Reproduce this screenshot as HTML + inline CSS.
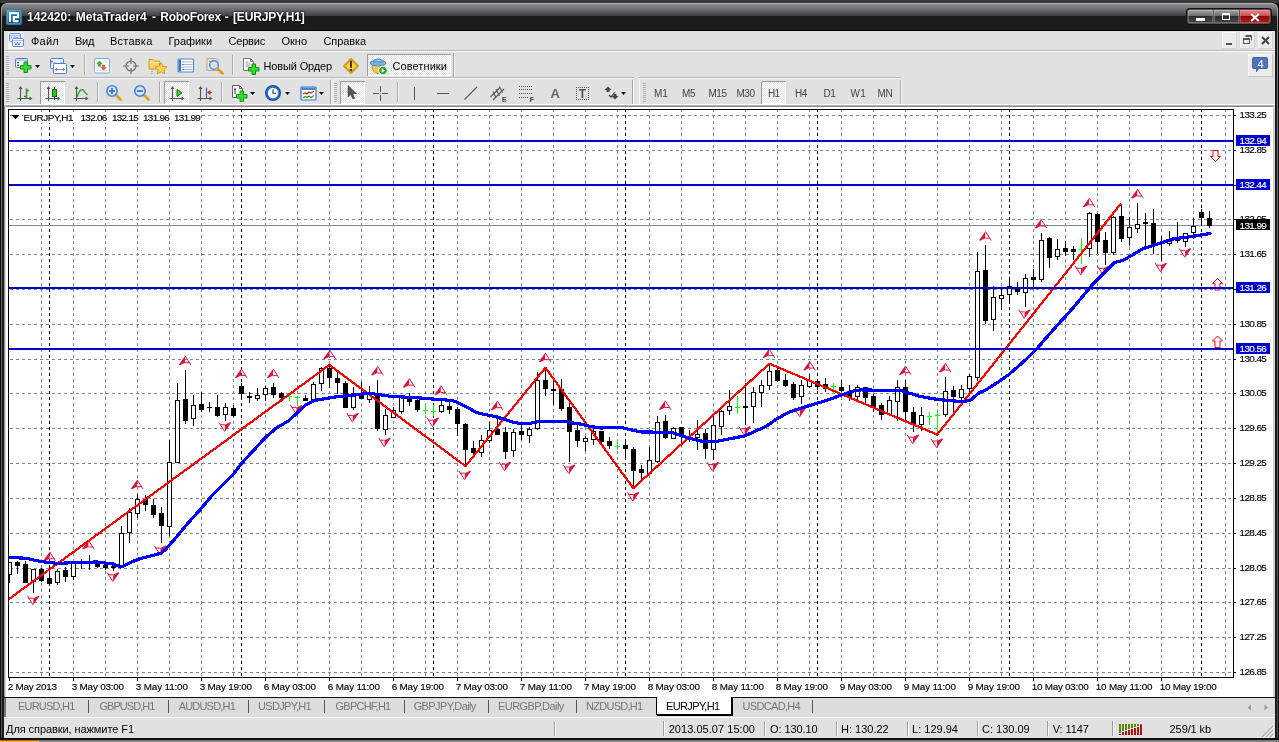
<!DOCTYPE html>
<html><head><meta charset="utf-8"><title>MetaTrader4</title><style>html,body{margin:0;padding:0;background:#0b0b0b;width:1279px;height:742px;overflow:hidden;}
#w{position:relative;width:1279px;height:742px;overflow:hidden;font-family:"Liberation Sans", sans-serif;}
#w div,#w svg,#w span{position:absolute;}
#w svg{overflow:visible;}
.t{white-space:nowrap;}
#tx{left:0;top:0;width:1279px;height:742px;will-change:transform;}
</style></head><body><div id="w">
<div style="left:0px;top:0px;width:1279px;height:742px;background:#0b0b0b;"></div>
<div style="left:0px;top:0px;width:1279px;height:3px;background:#353535;"></div>
<div style="left:0px;top:1px;width:1279px;height:1px;background:#424242;"></div>
<div style="left:1px;top:3px;width:1277px;height:737px;border-radius:6px 6px 0 0;background:linear-gradient(#b4b4b8 0px,#777 30px,#505050 100%);"></div>
<div style="left:2px;top:4px;width:1275px;height:736px;border-radius:5px 5px 0 0;background:linear-gradient(#8e8e92 0px,#7c7c80 3px,#424244 11.5px,#1c1c1e 12px,#1c1c1e 100%);"></div>
<div style="left:4px;top:30px;width:1271px;height:1px;background:#000;"></div>
<div style="left:4px;top:31px;width:1271px;height:75px;background:#e1e1e1;"></div>
<div style="left:4px;top:51px;width:1271px;height:1px;background:#fff;"></div>
<div style="left:4px;top:50px;width:1271px;height:1px;background:#b8b8b8;"></div>
<div style="left:4px;top:77px;width:328px;height:1px;background:#b8b8b8;"></div>
<div style="left:4px;top:78px;width:328px;height:1px;background:#fafafa;"></div>
<div style="left:334px;top:77px;width:300px;height:1px;background:#b8b8b8;"></div>
<div style="left:334px;top:78px;width:300px;height:1px;background:#fafafa;"></div>
<div style="left:639px;top:77px;width:262px;height:1px;background:#b8b8b8;"></div>
<div style="left:639px;top:78px;width:262px;height:1px;background:#fafafa;"></div>
<div style="left:4px;top:77px;width:451px;height:1px;background:#b8b8b8;"></div>
<div style="left:4px;top:104px;width:1271px;height:1px;background:#fafafa;"></div>
<div style="left:4px;top:105px;width:1271px;height:1px;background:#b4b4b4;"></div>
<div style="left:4px;top:106px;width:1271px;height:591px;background:#fff;"></div>
<div style="left:4px;top:106px;width:1271px;height:1px;background:#8c8a84;"></div>
<div style="left:4px;top:106px;width:1px;height:591px;background:#9a9a9a;"></div>
<div style="left:5px;top:106px;width:1px;height:591px;background:#d8d8d8;"></div>
<div style="left:1273px;top:106px;width:2px;height:591px;background:#d0d0d0;"></div>
<div style="left:4px;top:697px;width:1271px;height:1px;background:#111;"></div>
<div style="left:4px;top:698px;width:1271px;height:19px;background:#dcdcdc;"></div>
<div style="left:4px;top:717px;width:1271px;height:1px;background:#fff;"></div>
<div style="left:4px;top:718px;width:1271px;height:20px;background:#e1e1e1;"></div>
<div style="left:0px;top:738px;width:1279px;height:2px;background:#0e0e10;"></div>
<div style="left:0px;top:740px;width:1279px;height:2px;background:#808080;"></div>
<div style="left:0px;top:740px;width:39px;height:2px;background:#f4b040;"></div>
<div style="left:0px;top:740px;width:39px;height:1px;background:#c86010;"></div>
<svg style="left:6px;top:9px;" width="16" height="16" viewBox="0 0 16 16"><defs><linearGradient id="lg" x1="0" y1="0" x2="0.6" y2="1"><stop offset="0" stop-color="#5fa6cc"/><stop offset="0.45" stop-color="#1f70a2"/><stop offset="1" stop-color="#0c4670"/></linearGradient></defs><rect x="0.5" y="0.5" width="15" height="15" rx="1" fill="url(#lg)" stroke="#2a7cab"/><rect x="1.5" y="1.5" width="13" height="13" fill="none" stroke="#7fbbd9" stroke-opacity=".55"/><path d="M4 13V4.1H12.1V8.1H7.8V12.1H12.6" fill="none" stroke="#fff" stroke-width="2.1"/></svg>
<div style="left:1187px;top:9px;width:84px;height:15px;border-radius:3px;background:#555;box-shadow:0 0 0 1px #111;"></div>
<div style="left:1188px;top:10px;width:25px;height:13px;border-radius:2px 0 0 2px;box-shadow:inset 0 0 0 1px rgba(255,255,255,.22);background:linear-gradient(#a4a4a4,#6c6c6c 45%,#2e2e2e 50%,#484848);"></div>
<div style="left:1214px;top:10px;width:25px;height:13px;box-shadow:inset 0 0 0 1px rgba(255,255,255,.22);background:linear-gradient(#a4a4a4,#6c6c6c 45%,#2e2e2e 50%,#484848);"></div>
<div style="left:1240px;top:10px;width:30px;height:13px;border-radius:0 2px 2px 0;box-shadow:inset 0 0 0 1px rgba(255,140,140,.35);background:linear-gradient(#e89090,#c84c4c 45%,#8e0808 50%,#b02020);"></div>
<div style="left:1196px;top:18px;width:9px;height:3px;background:#fff;"></div>
<div style="left:1222px;top:13px;width:6px;height:4px;border:1px solid #fff;border-top-width:2px;"></div>
<svg style="left:1250px;top:12.5px" width="10" height="9" viewBox="0 0 10 9"><path d="M1.2 1L8.8 8M8.8 1L1.2 8" stroke="#fff" stroke-width="2"/></svg>
<svg style="left:8px;top:32px;" width="16" height="17" viewBox="0 0 16 17"><rect x="0" y="0" width="16" height="17" fill="#f6f6f6"/><rect x="1.5" y="1.5" width="11" height="8" rx="1" fill="#e8f0ff" stroke="#5b8df0"/><path d="M2 3.5h10" stroke="#a9c4f6"/><rect x="4.5" y="6.5" width="11" height="8" rx="1" fill="#fff" stroke="#5b8df0"/><path d="M5 8.5h10" stroke="#a9c4f6"/><path d="M3.5 6.5v-2M5.5 6l1.5-1.5 1.5 1.5 1.5-1" fill="none" stroke="#5b8df0" stroke-width="0.9"/><path d="M6.5 10l1.5 3 1.5-3 1.5 3 1.5-3" fill="none" stroke="#4a7ae8" stroke-width="0.9"/></svg>
<div style="left:1222px;top:32px;width:15px;height:17px;background:#ececec;box-shadow:inset -1px -1px 0 #d4d4d4, inset 1px 1px 0 #fafafa;"></div>
<div style="left:1240px;top:32px;width:15px;height:17px;background:#ececec;box-shadow:inset -1px -1px 0 #d4d4d4, inset 1px 1px 0 #fafafa;"></div>
<div style="left:1258px;top:32px;width:15px;height:17px;background:#ececec;box-shadow:inset -1px -1px 0 #d4d4d4, inset 1px 1px 0 #fafafa;"></div>
<div style="left:1226px;top:43px;width:6px;height:2px;background:#555;"></div>
<svg style="left:1243px;top:35px" width="10" height="10" viewBox="0 0 10 10"><path d="M2.5 0.5h6v5M2.5 1.5h6" stroke="#555" fill="none"/><rect x="0.5" y="3.5" width="6" height="5" fill="#ececec" stroke="#555"/><path d="M0.5 4.5h6" stroke="#555"/></svg>
<svg style="left:1261px;top:36px" width="9" height="9" viewBox="0 0 9 9"><path d="M1 1L8 8M8 1L1 8" stroke="#444" stroke-width="2"/></svg>
<div style="left:6px;top:56px;width:3px;height:1px;background:#b4b4b4;"></div><div style="left:6px;top:58px;width:3px;height:1px;background:#b4b4b4;"></div><div style="left:6px;top:60px;width:3px;height:1px;background:#b4b4b4;"></div><div style="left:6px;top:62px;width:3px;height:1px;background:#b4b4b4;"></div><div style="left:6px;top:64px;width:3px;height:1px;background:#b4b4b4;"></div><div style="left:6px;top:66px;width:3px;height:1px;background:#b4b4b4;"></div><div style="left:6px;top:68px;width:3px;height:1px;background:#b4b4b4;"></div><div style="left:6px;top:70px;width:3px;height:1px;background:#b4b4b4;"></div><div style="left:6px;top:72px;width:3px;height:1px;background:#b4b4b4;"></div><div style="left:6px;top:74px;width:3px;height:1px;background:#b4b4b4;"></div>
<svg style="left:15px;top:57px;" width="19" height="18" viewBox="0 0 19 18"><rect x="0.5" y="1.5" width="12" height="9" rx="1" fill="#fff" stroke="#4a80d4"/><path d="M1 3h11" stroke="#7aa4e6"/><path d="M3 5v4M2 6l1-1 1 1M2 8l1 1 1-1" stroke="#555" fill="none" stroke-width="0.8"/><path d="M5.5 8.5h3.5v-3.5h3.5v3.5h3.5v3.5h-3.5v3.5h-3.5v-3.5h-3.5z" fill="#36dc36" stroke="#129412" stroke-width="1"/></svg>
<svg style="left:35px;top:65px;" width="5" height="3" viewBox="0 0 5 3"><path d="M0 0h5L2.5 3z" fill="#000"/></svg>
<svg style="left:49px;top:57px;" width="19" height="18" viewBox="0 0 19 18"><rect x="1.5" y="1.5" width="13" height="10" rx="1" fill="#eef4ff" stroke="#4a80d4"/><path d="M3 3.5v3M2 4.5h2M5 6.5h8M5 6.5l1.5-1.5M5 6.5l1.5 1.5M13 6.5l-1.5-1.5M13 6.5l-1.5 1.5" stroke="#5a6a8a" fill="none" stroke-width="0.8"/><rect x="4.5" y="6.5" width="13" height="10" rx="1" fill="#fff" stroke="#4a80d4"/><path d="M6.5 12.5h9M6.5 12.5l1.5-1.5M6.5 12.5l1.5 1.5M15.5 12.5l-1.5-1.5M15.5 12.5l-1.5 1.5" stroke="#5a6a8a" fill="none" stroke-width="0.8"/></svg>
<svg style="left:70px;top:65px;" width="5" height="3" viewBox="0 0 5 3"><path d="M0 0h5L2.5 3z" fill="#000"/></svg>
<div style="left:84px;top:55px;width:1px;height:20px;background:#a8a8a8;"></div><div style="left:85px;top:55px;width:1px;height:20px;background:#f6f6f6;"></div>
<svg style="left:93px;top:57px;" width="18" height="18" viewBox="0 0 18 18"><rect x="1.5" y="1.5" width="15" height="14.5" rx="1.5" fill="#fff" stroke="#7ea8e6" stroke-width="1"/><path d="M3 13.5h12M9.5 4.5h5M3.5 11h4" stroke="#d4e0f4"/><path d="M6.5 4l2.6 2.8h-1.6v2.4h-2v-2.4H3.9z" fill="#35b835" stroke="#0b7a0b" stroke-width="0.5"/><path d="M10.5 13.2l-2.6-2.8h1.6v-2.4h2v2.4h1.6z" fill="#f2603a" stroke="#b83010" stroke-width="0.5"/></svg>
<svg style="left:122px;top:57px;" width="18" height="18" viewBox="0 0 18 18"><circle cx="9" cy="9" r="5" fill="none" stroke="#6e6e6e" stroke-width="1.2"/><path d="M9 1v6M9 11v6M1 9h6M11 9h6" stroke="#6e6e6e" stroke-width="1.2"/></svg>
<svg style="left:148px;top:56px;" width="20" height="19" viewBox="0 0 20 19"><path d="M1 3.5h4l1.5 1.5h5v8h-10.5z" fill="#f6d36a" stroke="#c8982a"/><path d="M1.5 6.5h10" stroke="#fbe9a8"/><path d="M4 13v5" stroke="#888" stroke-dasharray="1 1"/><path d="M13 6.5l1.8 3.8 4.2.5-3.1 2.9.8 4.1-3.7-2-3.7 2 .8-4.1-3.1-2.9 4.2-.5z" fill="#fbd54a" stroke="#c8941a" stroke-width="0.9"/></svg>
<svg style="left:177px;top:58px;" width="18" height="16" viewBox="0 0 18 16"><rect x="1" y="1" width="15.5" height="13" rx="1" fill="#fff" stroke="#4a84dc" stroke-width="1.1"/><rect x="1.6" y="1.6" width="2.6" height="11.8" fill="#3f74c4"/><path d="M6.5 4h9M6.5 6.5h9M6.5 9h9M6.5 11.5h9" stroke="#9db8e0"/><path d="M5.5 4h1M5.5 9h1" stroke="#e22"/><path d="M5.5 6.5h1M5.5 11.5h1" stroke="#222"/></svg>
<svg style="left:205px;top:56px;" width="20" height="20" viewBox="0 0 20 20"><path d="M2 2.5h9l2 2v10h-11z" fill="#ece6d8" stroke="#b0a890"/><path d="M4 5l2 1 2-2 2 1" stroke="#778" fill="none"/><circle cx="9" cy="9" r="4.3" fill="#cfe2f8" fill-opacity=".85" stroke="#5a8cd4" stroke-width="1.5"/><path d="M12.5 12.5l5 5" stroke="#d8a020" stroke-width="2.6" stroke-linecap="round"/></svg>
<div style="left:232px;top:55px;width:1px;height:20px;background:#a8a8a8;"></div><div style="left:233px;top:55px;width:1px;height:20px;background:#f6f6f6;"></div>
<svg style="left:242px;top:57px;" width="19" height="19" viewBox="0 0 19 19"><path d="M1.5 1.5h7l3 3v9h-10z" fill="#fff" stroke="#777"/><path d="M8.5 1.5v3h3" fill="none" stroke="#777"/><path d="M3.5 5h3M3.5 7h5M3.5 9h4" stroke="#999"/><path d="M6.5 10.5h3.5v-3.5h3.5v3.5h3.5v3.5h-3.5v3.5h-3.5v-3.5h-3.5z" fill="#36dc36" stroke="#129412" stroke-width="1"/></svg>
<svg style="left:342px;top:57px;" width="18" height="18" viewBox="0 0 18 18"><path d="M9 2L16 9L9 16L2 9z" fill="#f7d23e" stroke="#cf9c1c" stroke-width="2" stroke-linejoin="round"/><path d="M9 4.5v5.5" stroke="#4a3a10" stroke-width="2" stroke-linecap="round"/><circle cx="9" cy="13" r="1.2" fill="#4a3a10"/></svg>
<div style="left:367px;top:54px;width:84px;height:22px;background-image:linear-gradient(45deg,#fff 25%,transparent 25%,transparent 75%,#fff 75%),linear-gradient(45deg,#fff 25%,transparent 25%,transparent 75%,#fff 75%);background-size:2px 2px;background-position:0 0,1px 1px;background-color:#e4e4e4;box-shadow:inset 1px 1px 0 #9c9c9c, inset -1px -1px 0 #fff;"></div>
<svg style="left:369px;top:56px;" width="20" height="20" viewBox="0 0 20 20"><ellipse cx="9" cy="11" rx="6" ry="6.5" fill="#f2c84a" stroke="#c89a20"/><ellipse cx="9" cy="7" rx="8" ry="2.8" fill="#7ab4e6" stroke="#4a86c4"/><path d="M4.5 6c0-4 9-4 9 0z" fill="#8cc2ee" stroke="#4a86c4"/><circle cx="14" cy="14.5" r="4.3" fill="#25a825" stroke="#fff" stroke-width="1"/><path d="M12.6 12.3v4.4l3.6-2.2z" fill="#fff"/></svg>
<div style="left:453px;top:53px;width:1px;height:24px;background:#a8a8a8;"></div><div style="left:454px;top:53px;width:1px;height:24px;background:#f6f6f6;"></div>
<div style="left:1248px;top:54px;width:25px;height:23px;background:#ececec;box-shadow:inset -1px -1px 0 #c4c4c4, inset 1px 1px 0 #fafafa;"></div>
<svg style="left:1252px;top:57px;" width="17" height="15" viewBox="0 0 17 15"><path d="M1.5 0.5h13a1 1 0 0 1 1 1v9a1 1 0 0 1-1 1h-8l-2 3v-3h-3a1 1 0 0 1-1-1v-9a1 1 0 0 1 1-1z" fill="#4f74b8" stroke="#3f63a4"/></svg>
<div style="left:6px;top:83px;width:3px;height:1px;background:#b4b4b4;"></div><div style="left:6px;top:85px;width:3px;height:1px;background:#b4b4b4;"></div><div style="left:6px;top:87px;width:3px;height:1px;background:#b4b4b4;"></div><div style="left:6px;top:89px;width:3px;height:1px;background:#b4b4b4;"></div><div style="left:6px;top:91px;width:3px;height:1px;background:#b4b4b4;"></div><div style="left:6px;top:93px;width:3px;height:1px;background:#b4b4b4;"></div><div style="left:6px;top:95px;width:3px;height:1px;background:#b4b4b4;"></div><div style="left:6px;top:97px;width:3px;height:1px;background:#b4b4b4;"></div><div style="left:6px;top:99px;width:3px;height:1px;background:#b4b4b4;"></div><div style="left:6px;top:101px;width:3px;height:1px;background:#b4b4b4;"></div>
<svg style="left:17px;top:86px;" width="16" height="16" viewBox="0 0 16 16"><path d="M3.5 1v14M0.5 12.5h14" stroke="#555" stroke-width="1.1" fill="none"/><path d="M3.5 0l-2 3h4zM15.5 12.5l-3-2v4z" fill="#555"/><path d="M9.5 2.5v10M9.5 4.5h2.5M7 10.5h2.5" stroke="#2a9a2a" stroke-width="1.6" fill="none"/></svg>
<div style="left:40px;top:81px;width:25px;height:23px;background-image:linear-gradient(45deg,#fff 25%,transparent 25%,transparent 75%,#fff 75%),linear-gradient(45deg,#fff 25%,transparent 25%,transparent 75%,#fff 75%);background-size:2px 2px;background-position:0 0,1px 1px;background-color:#e4e4e4;box-shadow:inset 1px 1px 0 #9c9c9c, inset -1px -1px 0 #fff;"></div>
<svg style="left:45px;top:86px;" width="16" height="16" viewBox="0 0 16 16"><path d="M3.5 1v14M0.5 12.5h14" stroke="#555" stroke-width="1.1" fill="none"/><path d="M3.5 0l-2 3h4zM15.5 12.5l-3-2v4z" fill="#555"/><path d="M9.5 1v13" stroke="#333"/><rect x="7.5" y="3.5" width="4" height="7" fill="#2fc02f" stroke="#0b7a0b"/></svg>
<svg style="left:73px;top:86px;" width="16" height="16" viewBox="0 0 16 16"><path d="M3.5 1v14M0.5 12.5h14" stroke="#555" stroke-width="1.1" fill="none"/><path d="M3.5 0l-2 3h4zM15.5 12.5l-3-2v4z" fill="#555"/><path d="M4 11C6 4 9 2 11 5 12.5 7 13 8 14.5 9" stroke="#2a9a2a" stroke-width="1.3" fill="none"/></svg>
<div style="left:97px;top:82px;width:1px;height:20px;background:#a8a8a8;"></div><div style="left:98px;top:82px;width:1px;height:20px;background:#f6f6f6;"></div>
<svg style="left:105px;top:84px;" width="18" height="18" viewBox="0 0 18 18"><path d="M10.5 10.5l5 5" stroke="#d8a420" stroke-width="2.8" stroke-linecap="round"/><circle cx="7" cy="7" r="5.2" fill="#d6e6fa" stroke="#4a84d8" stroke-width="1.6"/><path d="M4 7h6" stroke="#3a74c8" stroke-width="1.8"/><path d="M7 4v6" stroke="#3a74c8" stroke-width="1.8"/></svg>
<svg style="left:133px;top:84px;" width="18" height="18" viewBox="0 0 18 18"><path d="M10.5 10.5l5 5" stroke="#d8a420" stroke-width="2.8" stroke-linecap="round"/><circle cx="7" cy="7" r="5.2" fill="#d6e6fa" stroke="#4a84d8" stroke-width="1.6"/><path d="M4 7h6" stroke="#3a74c8" stroke-width="1.8"/></svg>
<div style="left:159px;top:82px;width:1px;height:20px;background:#a8a8a8;"></div><div style="left:160px;top:82px;width:1px;height:20px;background:#f6f6f6;"></div>
<div style="left:164px;top:81px;width:25px;height:23px;background-image:linear-gradient(45deg,#fff 25%,transparent 25%,transparent 75%,#fff 75%),linear-gradient(45deg,#fff 25%,transparent 25%,transparent 75%,#fff 75%);background-size:2px 2px;background-position:0 0,1px 1px;background-color:#e4e4e4;box-shadow:inset 1px 1px 0 #9c9c9c, inset -1px -1px 0 #fff;"></div>
<svg style="left:169px;top:86px;" width="16" height="16" viewBox="0 0 16 16"><path d="M3.5 1v14M0.5 12.5h14" stroke="#555" stroke-width="1.1" fill="none"/><path d="M3.5 0l-2 3h4zM15.5 12.5l-3-2v4z" fill="#555"/><path d="M8 3.5v7l5-3.5z" fill="#3fd03f" stroke="#0b7a0b"/></svg>
<svg style="left:197px;top:86px;" width="16" height="16" viewBox="0 0 16 16"><path d="M3.5 1v14M0.5 12.5h14" stroke="#555" stroke-width="1.1" fill="none"/><path d="M3.5 0l-2 3h4zM15.5 12.5l-3-2v4z" fill="#555"/><path d="M9.5 1.5v11" stroke="#2a6ab0" stroke-width="1.2"/><path d="M15 6.5h-4M10.5 6.5l2.6-1.8v3.6z" stroke="#d03010" fill="#d03010" stroke-width="0.9"/></svg>
<div style="left:221px;top:82px;width:1px;height:20px;background:#a8a8a8;"></div><div style="left:222px;top:82px;width:1px;height:20px;background:#f6f6f6;"></div>
<svg style="left:231px;top:84px;" width="18" height="19" viewBox="0 0 18 19"><path d="M1.5 1.5h7l3 3v9h-10z" fill="#fff" stroke="#666"/><path d="M8.5 1.5v3h3" fill="none" stroke="#666"/><path d="M4 4v6M3 5.5h2" stroke="#444"/><path d="M5.5 10.5h3.5v-3.5h3.5v3.5h3.5v3.5h-3.5v3.5h-3.5v-3.5h-3.5z" fill="#36dc36" stroke="#129412" stroke-width="1"/></svg>
<svg style="left:249.5px;top:92px;" width="5" height="3" viewBox="0 0 5 3"><path d="M0 0h5L2.5 3z" fill="#000"/></svg>
<svg style="left:264px;top:84px;" width="18" height="18" viewBox="0 0 18 18"><circle cx="9" cy="9" r="7.4" fill="#2a6fd0" stroke="#1a4fa0" stroke-width="1.2"/><circle cx="9" cy="9" r="5.2" fill="#f4f8ff"/><path d="M9 5.5v3.8h3" stroke="#333" stroke-width="1.1" fill="none"/></svg>
<svg style="left:284.5px;top:92px;" width="5" height="3" viewBox="0 0 5 3"><path d="M0 0h5L2.5 3z" fill="#000"/></svg>
<svg style="left:299.5px;top:85.5px;" width="18" height="16" viewBox="0 0 18 16"><rect x="1" y="1" width="15" height="13" rx="1" fill="#fff" stroke="#3a74c8" stroke-width="1.2"/><rect x="1.5" y="1.5" width="14" height="2.5" fill="#4a84d8"/><path d="M3 8l2-1 2 1 2-2 2 1 3-2" stroke="#d03010" fill="none" stroke-width="1.2"/><path d="M3 12l2-1.5 2 1 2-1.5 2 1.5 3-2" stroke="#2a9a2a" fill="none" stroke-width="1.2"/></svg>
<svg style="left:319px;top:92px;" width="5" height="3" viewBox="0 0 5 3"><path d="M0 0h5L2.5 3z" fill="#000"/></svg>
<div style="left:330px;top:80px;width:1px;height:24px;background:#a8a8a8;"></div><div style="left:331px;top:80px;width:1px;height:24px;background:#f6f6f6;"></div>
<div style="left:334px;top:83px;width:3px;height:1px;background:#b4b4b4;"></div><div style="left:334px;top:85px;width:3px;height:1px;background:#b4b4b4;"></div><div style="left:334px;top:87px;width:3px;height:1px;background:#b4b4b4;"></div><div style="left:334px;top:89px;width:3px;height:1px;background:#b4b4b4;"></div><div style="left:334px;top:91px;width:3px;height:1px;background:#b4b4b4;"></div><div style="left:334px;top:93px;width:3px;height:1px;background:#b4b4b4;"></div><div style="left:334px;top:95px;width:3px;height:1px;background:#b4b4b4;"></div><div style="left:334px;top:97px;width:3px;height:1px;background:#b4b4b4;"></div><div style="left:334px;top:99px;width:3px;height:1px;background:#b4b4b4;"></div><div style="left:334px;top:101px;width:3px;height:1px;background:#b4b4b4;"></div>
<div style="left:340px;top:81px;width:25px;height:23px;background-image:linear-gradient(45deg,#fff 25%,transparent 25%,transparent 75%,#fff 75%),linear-gradient(45deg,#fff 25%,transparent 25%,transparent 75%,#fff 75%);background-size:2px 2px;background-position:0 0,1px 1px;background-color:#e4e4e4;box-shadow:inset 1px 1px 0 #9c9c9c, inset -1px -1px 0 #fff;"></div>
<svg style="left:347px;top:85px;" width="10" height="15" viewBox="0 0 10 15"><path d="M1 0.5v11.5l2.8-2.6 2 4.6 1.9-.8-2-4.5h3.8z" fill="#555" stroke="#444" stroke-width="0.6"/></svg>
<svg style="left:373px;top:86px;" width="16" height="16" viewBox="0 0 16 16"><path shape-rendering="crispEdges" d="M7.5 0v6M7.5 9v6M0 7.5h6M9 7.5h6" stroke="#555" stroke-width="1"/><rect x="7" y="7" width="1" height="1" fill="#888"/></svg>
<div style="left:397px;top:82px;width:1px;height:20px;background:#a8a8a8;"></div><div style="left:398px;top:82px;width:1px;height:20px;background:#f6f6f6;"></div>
<div style="left:414px;top:87px;width:1px;height:13px;background:#555;"></div>
<div style="left:437px;top:93px;width:12px;height:1px;background:#555;"></div>
<svg style="left:464px;top:86px;" width="14" height="14" viewBox="0 0 14 14"><path d="M0.5 13.5L13 1" stroke="#555" stroke-width="1.1"/></svg>
<svg style="left:490px;top:85px;" width="17" height="17" viewBox="0 0 17 17"><path d="M0.5 12L10 2.5M3 15L14 4M3 6.5l3 6M6 4l3.5 7M9.5 1.5l3 6" stroke="#555" stroke-width="1.1" fill="none"/></svg>
<svg style="left:519px;top:85px;" width="16" height="14" viewBox="0 0 16 14"><path shape-rendering="crispEdges" d="M0 1.5h14M0 4.5h14M0 8.5h14M0 12.5h10" stroke="#555" stroke-dasharray="1 1"/></svg>
<svg style="left:575px;top:86px;" width="15" height="15" viewBox="0 0 15 15"><path shape-rendering="crispEdges" d="M1 1.5h13M1 13.5h13M1.5 1v13M13.5 1v13" fill="none" stroke="#555" stroke-dasharray="1 1"/></svg>
<svg style="left:604px;top:86px;" width="15" height="14" viewBox="0 0 15 14"><path d="M4 0.5l3.5 3.5h-2v2h-3v-2h-2z M11 13.5l-3.5-3.5h2v-2h3v2h2z" fill="#444"/><path d="M5 9l2 2 4-5" stroke="#444" fill="none" stroke-width="1.2"/></svg>
<svg style="left:621px;top:92px;" width="5" height="3" viewBox="0 0 5 3"><path d="M0 0h5L2.5 3z" fill="#000"/></svg>
<div style="left:632px;top:80px;width:1px;height:24px;background:#a8a8a8;"></div><div style="left:633px;top:80px;width:1px;height:24px;background:#f6f6f6;"></div>
<div style="left:643px;top:83px;width:3px;height:1px;background:#b4b4b4;"></div><div style="left:643px;top:85px;width:3px;height:1px;background:#b4b4b4;"></div><div style="left:643px;top:87px;width:3px;height:1px;background:#b4b4b4;"></div><div style="left:643px;top:89px;width:3px;height:1px;background:#b4b4b4;"></div><div style="left:643px;top:91px;width:3px;height:1px;background:#b4b4b4;"></div><div style="left:643px;top:93px;width:3px;height:1px;background:#b4b4b4;"></div><div style="left:643px;top:95px;width:3px;height:1px;background:#b4b4b4;"></div><div style="left:643px;top:97px;width:3px;height:1px;background:#b4b4b4;"></div><div style="left:643px;top:99px;width:3px;height:1px;background:#b4b4b4;"></div><div style="left:643px;top:101px;width:3px;height:1px;background:#b4b4b4;"></div>
<div style="left:761px;top:81px;width:25px;height:23px;background-image:linear-gradient(45deg,#fff 25%,transparent 25%,transparent 75%,#fff 75%),linear-gradient(45deg,#fff 25%,transparent 25%,transparent 75%,#fff 75%);background-size:2px 2px;background-position:0 0,1px 1px;background-color:#e4e4e4;box-shadow:inset 1px 1px 0 #9c9c9c, inset -1px -1px 0 #fff;"></div>
<div style="left:900px;top:80px;width:1px;height:24px;background:#a8a8a8;"></div><div style="left:901px;top:80px;width:1px;height:24px;background:#f6f6f6;"></div>
<div style="left:639px;top:79px;width:1px;height:25px;background:#f8f8f8;"></div>
<div style="left:333px;top:79px;width:1px;height:25px;background:#f8f8f8;"></div>
<svg style="left:0;top:0" width="1279" height="742" viewBox="0 0 1279 742"><g shape-rendering="crispEdges"><g stroke="#778899" stroke-width="1" stroke-dasharray="3 3" fill="none"><path d="M9 115.5 H1233" stroke-dashoffset="5"/><path d="M9 150.5 H1233" stroke-dashoffset="5"/><path d="M9 185.5 H1233" stroke-dashoffset="5"/><path d="M9 219.5 H1233" stroke-dashoffset="5"/><path d="M9 254.5 H1233" stroke-dashoffset="5"/><path d="M9 289.5 H1233" stroke-dashoffset="5"/><path d="M9 324.5 H1233" stroke-dashoffset="5"/><path d="M9 359.5 H1233" stroke-dashoffset="5"/><path d="M9 393.5 H1233" stroke-dashoffset="5"/><path d="M9 428.5 H1233" stroke-dashoffset="5"/><path d="M9 463.5 H1233" stroke-dashoffset="5"/><path d="M9 498.5 H1233" stroke-dashoffset="5"/><path d="M9 533.5 H1233" stroke-dashoffset="5"/><path d="M9 568.5 H1233" stroke-dashoffset="5"/><path d="M9 602.5 H1233" stroke-dashoffset="5"/><path d="M9 637.5 H1233" stroke-dashoffset="5"/><path d="M9 672.5 H1233" stroke-dashoffset="5"/><path d="M41.5 110 V677" stroke-dashoffset="1"/><path d="M73.5 110 V677" stroke-dashoffset="1"/><path d="M105.5 110 V677" stroke-dashoffset="1"/><path d="M137.5 110 V677" stroke-dashoffset="1"/><path d="M169.5 110 V677" stroke-dashoffset="1"/><path d="M201.5 110 V677" stroke-dashoffset="1"/><path d="M233.5 110 V677" stroke-dashoffset="1"/><path d="M265.5 110 V677" stroke-dashoffset="1"/><path d="M297.5 110 V677" stroke-dashoffset="1"/><path d="M329.5 110 V677" stroke-dashoffset="1"/><path d="M361.5 110 V677" stroke-dashoffset="1"/><path d="M393.5 110 V677" stroke-dashoffset="1"/><path d="M425.5 110 V677" stroke-dashoffset="1"/><path d="M457.5 110 V677" stroke-dashoffset="1"/><path d="M489.5 110 V677" stroke-dashoffset="1"/><path d="M521.5 110 V677" stroke-dashoffset="1"/><path d="M553.5 110 V677" stroke-dashoffset="1"/><path d="M585.5 110 V677" stroke-dashoffset="1"/><path d="M617.5 110 V677" stroke-dashoffset="1"/><path d="M649.5 110 V677" stroke-dashoffset="1"/><path d="M681.5 110 V677" stroke-dashoffset="1"/><path d="M713.5 110 V677" stroke-dashoffset="1"/><path d="M745.5 110 V677" stroke-dashoffset="1"/><path d="M777.5 110 V677" stroke-dashoffset="1"/><path d="M809.5 110 V677" stroke-dashoffset="1"/><path d="M841.5 110 V677" stroke-dashoffset="1"/><path d="M873.5 110 V677" stroke-dashoffset="1"/><path d="M905.5 110 V677" stroke-dashoffset="1"/><path d="M937.5 110 V677" stroke-dashoffset="1"/><path d="M969.5 110 V677" stroke-dashoffset="1"/><path d="M1001.5 110 V677" stroke-dashoffset="1"/><path d="M1033.5 110 V677" stroke-dashoffset="1"/><path d="M1065.5 110 V677" stroke-dashoffset="1"/><path d="M1097.5 110 V677" stroke-dashoffset="1"/><path d="M1129.5 110 V677" stroke-dashoffset="1"/><path d="M1161.5 110 V677" stroke-dashoffset="1"/><path d="M1193.5 110 V677" stroke-dashoffset="1"/><path d="M1225.5 110 V677" stroke-dashoffset="1"/></g><g stroke="#000" stroke-width="1" stroke-dasharray="3 3" fill="none"><path d="M49.5 110 V677" stroke-dashoffset="1"/><path d="M241.5 110 V677" stroke-dashoffset="1"/><path d="M433.5 110 V677" stroke-dashoffset="1"/><path d="M625.5 110 V677" stroke-dashoffset="1"/><path d="M817.5 110 V677" stroke-dashoffset="1"/><path d="M1009.5 110 V677" stroke-dashoffset="1"/><path d="M1201.5 110 V677" stroke-dashoffset="1"/></g><rect x="9" y="225" width="1224" height="1" fill="#7b8b9b"/><clipPath id="cc"><rect x="9" y="110" width="1224" height="567"/></clipPath><g clip-path="url(#cc)"><rect x="9" y="562" width="1" height="21" fill="#000"/><rect x="7" y="562" width="5" height="13" fill="#000"/><rect x="8" y="563" width="3" height="11" fill="#fff"/><rect x="17" y="561" width="1" height="13" fill="#000"/><rect x="15" y="562" width="5" height="4" fill="#000"/><rect x="25" y="561" width="1" height="22" fill="#000"/><rect x="23" y="564" width="5" height="19" fill="#000"/><rect x="33" y="569" width="1" height="24" fill="#000"/><rect x="31" y="569" width="5" height="13" fill="#000"/><rect x="32" y="570" width="3" height="11" fill="#fff"/><rect x="41" y="568" width="1" height="14" fill="#000"/><rect x="39" y="569" width="5" height="12" fill="#000"/><rect x="49" y="569" width="1" height="17" fill="#000"/><rect x="47" y="578" width="5" height="6" fill="#000"/><rect x="57" y="569" width="1" height="16" fill="#000"/><rect x="55" y="571" width="5" height="12" fill="#000"/><rect x="56" y="572" width="3" height="10" fill="#fff"/><rect x="65" y="567" width="1" height="15" fill="#000"/><rect x="63" y="570" width="5" height="7" fill="#000"/><rect x="73" y="562" width="1" height="18" fill="#000"/><rect x="71" y="562" width="5" height="15" fill="#000"/><rect x="72" y="563" width="3" height="13" fill="#fff"/><rect x="81" y="559" width="1" height="10" fill="#000"/><rect x="79" y="563" width="5" height="1" fill="#000"/><rect x="89" y="555" width="1" height="15" fill="#000"/><rect x="87" y="563" width="5" height="1" fill="#000"/><rect x="97" y="563" width="1" height="5" fill="#000"/><rect x="95" y="564" width="5" height="3" fill="#000"/><rect x="105" y="562" width="1" height="8" fill="#000"/><rect x="103" y="565" width="5" height="3" fill="#000"/><rect x="113" y="562" width="1" height="9" fill="#000"/><rect x="111" y="566" width="5" height="2" fill="#000"/><rect x="121" y="526" width="1" height="41" fill="#000"/><rect x="119" y="533" width="5" height="34" fill="#000"/><rect x="120" y="534" width="3" height="32" fill="#fff"/><rect x="129" y="508" width="1" height="35" fill="#000"/><rect x="127" y="512" width="5" height="21" fill="#000"/><rect x="128" y="513" width="3" height="19" fill="#fff"/><rect x="137" y="494" width="1" height="24" fill="#000"/><rect x="135" y="499" width="5" height="15" fill="#000"/><rect x="136" y="500" width="3" height="13" fill="#fff"/><rect x="145" y="495" width="1" height="16" fill="#000"/><rect x="143" y="499" width="5" height="6" fill="#000"/><rect x="153" y="499" width="1" height="19" fill="#000"/><rect x="151" y="505" width="5" height="10" fill="#000"/><rect x="161" y="507" width="1" height="36" fill="#000"/><rect x="159" y="513" width="5" height="13" fill="#000"/><rect x="169" y="440" width="1" height="96" fill="#000"/><rect x="167" y="462" width="5" height="65" fill="#000"/><rect x="168" y="463" width="3" height="63" fill="#fff"/><rect x="177" y="383" width="1" height="80" fill="#000"/><rect x="175" y="400" width="5" height="63" fill="#000"/><rect x="176" y="401" width="3" height="61" fill="#fff"/><rect x="185" y="370" width="1" height="54" fill="#000"/><rect x="183" y="399" width="5" height="22" fill="#000"/><rect x="193" y="395" width="1" height="31" fill="#000"/><rect x="191" y="405" width="5" height="14" fill="#000"/><rect x="192" y="406" width="3" height="12" fill="#fff"/><rect x="201" y="392" width="1" height="20" fill="#000"/><rect x="199" y="404" width="5" height="6" fill="#000"/><rect x="209" y="402" width="1" height="10" fill="#000"/><rect x="207" y="407" width="5" height="1" fill="#000"/><rect x="217" y="395" width="1" height="22" fill="#000"/><rect x="215" y="407" width="5" height="9" fill="#000"/><rect x="225" y="403" width="1" height="18" fill="#000"/><rect x="223" y="407" width="5" height="8" fill="#000"/><rect x="224" y="408" width="3" height="6" fill="#fff"/><rect x="233" y="405" width="1" height="12" fill="#000"/><rect x="231" y="408" width="5" height="8" fill="#000"/><rect x="241" y="383" width="1" height="17" fill="#000"/><rect x="239" y="386" width="5" height="8" fill="#000"/><rect x="249" y="392" width="1" height="11" fill="#000"/><rect x="247" y="396" width="5" height="2" fill="#000"/><rect x="257" y="388" width="1" height="13" fill="#000"/><rect x="255" y="395" width="5" height="4" fill="#000"/><rect x="256" y="396" width="3" height="2" fill="#fff"/><rect x="265" y="386" width="1" height="15" fill="#000"/><rect x="263" y="388" width="5" height="7" fill="#000"/><rect x="264" y="389" width="3" height="5" fill="#fff"/><rect x="273" y="383" width="1" height="15" fill="#000"/><rect x="271" y="387" width="5" height="8" fill="#000"/><rect x="281" y="392" width="1" height="10" fill="#000"/><rect x="279" y="393" width="5" height="5" fill="#000"/><rect x="289" y="395" width="1" height="6" fill="#00ff00"/><rect x="287" y="396" width="5" height="1" fill="#00ff00"/><rect x="297" y="396" width="1" height="8" fill="#00ff00"/><rect x="295" y="397" width="5" height="1" fill="#00ff00"/><rect x="305" y="395" width="1" height="6" fill="#000"/><rect x="303" y="398" width="5" height="3" fill="#000"/><rect x="313" y="382" width="1" height="19" fill="#000"/><rect x="311" y="384" width="5" height="16" fill="#000"/><rect x="312" y="385" width="3" height="14" fill="#fff"/><rect x="321" y="367" width="1" height="24" fill="#000"/><rect x="319" y="368" width="5" height="16" fill="#000"/><rect x="320" y="369" width="3" height="14" fill="#fff"/><rect x="329" y="365" width="1" height="23" fill="#000"/><rect x="327" y="368" width="5" height="10" fill="#000"/><rect x="337" y="372" width="1" height="22" fill="#000"/><rect x="335" y="378" width="5" height="5" fill="#000"/><rect x="345" y="381" width="1" height="27" fill="#000"/><rect x="343" y="383" width="5" height="25" fill="#000"/><rect x="353" y="387" width="1" height="23" fill="#000"/><rect x="351" y="393" width="5" height="15" fill="#000"/><rect x="352" y="394" width="3" height="13" fill="#fff"/><rect x="361" y="382" width="1" height="17" fill="#000"/><rect x="359" y="395" width="5" height="4" fill="#000"/><rect x="369" y="386" width="1" height="17" fill="#000"/><rect x="367" y="393" width="5" height="7" fill="#000"/><rect x="368" y="394" width="3" height="5" fill="#fff"/><rect x="377" y="380" width="1" height="51" fill="#000"/><rect x="375" y="395" width="5" height="34" fill="#000"/><rect x="385" y="409" width="1" height="26" fill="#000"/><rect x="383" y="415" width="5" height="15" fill="#000"/><rect x="384" y="416" width="3" height="13" fill="#fff"/><rect x="393" y="407" width="1" height="11" fill="#000"/><rect x="391" y="410" width="5" height="8" fill="#000"/><rect x="392" y="411" width="3" height="6" fill="#fff"/><rect x="401" y="396" width="1" height="18" fill="#000"/><rect x="399" y="396" width="5" height="16" fill="#000"/><rect x="400" y="397" width="3" height="14" fill="#fff"/><rect x="409" y="393" width="1" height="13" fill="#000"/><rect x="407" y="396" width="5" height="6" fill="#000"/><rect x="417" y="399" width="1" height="13" fill="#000"/><rect x="415" y="400" width="5" height="10" fill="#000"/><rect x="425" y="404" width="1" height="10" fill="#00ff00"/><rect x="423" y="410" width="5" height="1" fill="#00ff00"/><rect x="433" y="405" width="1" height="11" fill="#00ff00"/><rect x="431" y="411" width="5" height="1" fill="#00ff00"/><rect x="441" y="401" width="1" height="12" fill="#000"/><rect x="439" y="405" width="5" height="7" fill="#000"/><rect x="440" y="406" width="3" height="5" fill="#fff"/><rect x="449" y="402" width="1" height="12" fill="#000"/><rect x="447" y="406" width="5" height="4" fill="#000"/><rect x="457" y="407" width="1" height="29" fill="#000"/><rect x="455" y="409" width="5" height="15" fill="#000"/><rect x="465" y="423" width="1" height="44" fill="#000"/><rect x="463" y="424" width="5" height="26" fill="#000"/><rect x="473" y="441" width="1" height="15" fill="#000"/><rect x="471" y="448" width="5" height="5" fill="#000"/><rect x="481" y="435" width="1" height="22" fill="#000"/><rect x="479" y="440" width="5" height="13" fill="#000"/><rect x="480" y="441" width="3" height="11" fill="#fff"/><rect x="489" y="422" width="1" height="21" fill="#000"/><rect x="487" y="430" width="5" height="11" fill="#000"/><rect x="488" y="431" width="3" height="9" fill="#fff"/><rect x="497" y="416" width="1" height="19" fill="#000"/><rect x="495" y="429" width="5" height="6" fill="#000"/><rect x="505" y="427" width="1" height="32" fill="#000"/><rect x="503" y="432" width="5" height="20" fill="#000"/><rect x="513" y="429" width="1" height="28" fill="#000"/><rect x="511" y="432" width="5" height="19" fill="#000"/><rect x="512" y="433" width="3" height="17" fill="#fff"/><rect x="521" y="424" width="1" height="16" fill="#000"/><rect x="519" y="431" width="5" height="4" fill="#000"/><rect x="529" y="427" width="1" height="16" fill="#000"/><rect x="527" y="429" width="5" height="7" fill="#000"/><rect x="528" y="430" width="3" height="5" fill="#fff"/><rect x="537" y="372" width="1" height="58" fill="#000"/><rect x="535" y="380" width="5" height="49" fill="#000"/><rect x="536" y="381" width="3" height="47" fill="#fff"/><rect x="545" y="368" width="1" height="28" fill="#000"/><rect x="543" y="380" width="5" height="9" fill="#000"/><rect x="553" y="380" width="1" height="25" fill="#000"/><rect x="551" y="389" width="5" height="2" fill="#000"/><rect x="561" y="379" width="1" height="32" fill="#000"/><rect x="559" y="389" width="5" height="20" fill="#000"/><rect x="569" y="402" width="1" height="60" fill="#000"/><rect x="567" y="407" width="5" height="25" fill="#000"/><rect x="577" y="424" width="1" height="23" fill="#000"/><rect x="575" y="430" width="5" height="11" fill="#000"/><rect x="585" y="436" width="1" height="15" fill="#000"/><rect x="583" y="438" width="5" height="4" fill="#000"/><rect x="584" y="439" width="3" height="2" fill="#fff"/><rect x="593" y="429" width="1" height="16" fill="#000"/><rect x="591" y="431" width="5" height="9" fill="#000"/><rect x="592" y="432" width="3" height="7" fill="#fff"/><rect x="601" y="431" width="1" height="12" fill="#000"/><rect x="599" y="431" width="5" height="11" fill="#000"/><rect x="609" y="437" width="1" height="12" fill="#000"/><rect x="607" y="441" width="5" height="5" fill="#000"/><rect x="617" y="441" width="1" height="9" fill="#00ff00"/><rect x="615" y="446" width="5" height="1" fill="#00ff00"/><rect x="625" y="440" width="1" height="17" fill="#000"/><rect x="623" y="445" width="5" height="4" fill="#000"/><rect x="633" y="447" width="1" height="41" fill="#000"/><rect x="631" y="449" width="5" height="22" fill="#000"/><rect x="641" y="465" width="1" height="15" fill="#000"/><rect x="639" y="469" width="5" height="4" fill="#000"/><rect x="649" y="447" width="1" height="27" fill="#000"/><rect x="647" y="460" width="5" height="14" fill="#000"/><rect x="648" y="461" width="3" height="12" fill="#fff"/><rect x="657" y="416" width="1" height="47" fill="#000"/><rect x="655" y="422" width="5" height="40" fill="#000"/><rect x="656" y="423" width="3" height="38" fill="#fff"/><rect x="665" y="415" width="1" height="24" fill="#000"/><rect x="663" y="421" width="5" height="17" fill="#000"/><rect x="673" y="427" width="1" height="12" fill="#000"/><rect x="671" y="428" width="5" height="11" fill="#000"/><rect x="672" y="429" width="3" height="9" fill="#fff"/><rect x="681" y="427" width="1" height="16" fill="#000"/><rect x="679" y="427" width="5" height="10" fill="#000"/><rect x="689" y="430" width="1" height="12" fill="#000"/><rect x="687" y="437" width="5" height="1" fill="#000"/><rect x="697" y="420" width="1" height="30" fill="#000"/><rect x="695" y="434" width="5" height="4" fill="#000"/><rect x="696" y="435" width="3" height="2" fill="#fff"/><rect x="705" y="429" width="1" height="30" fill="#000"/><rect x="703" y="433" width="5" height="16" fill="#000"/><rect x="713" y="415" width="1" height="45" fill="#000"/><rect x="711" y="425" width="5" height="25" fill="#000"/><rect x="712" y="426" width="3" height="23" fill="#fff"/><rect x="721" y="410" width="1" height="25" fill="#000"/><rect x="719" y="411" width="5" height="16" fill="#000"/><rect x="720" y="412" width="3" height="14" fill="#fff"/><rect x="729" y="390" width="1" height="25" fill="#000"/><rect x="727" y="406" width="5" height="5" fill="#000"/><rect x="728" y="407" width="3" height="3" fill="#fff"/><rect x="737" y="396" width="1" height="18" fill="#00ff00"/><rect x="735" y="407" width="5" height="1" fill="#00ff00"/><rect x="745" y="383" width="1" height="42" fill="#000"/><rect x="743" y="406" width="5" height="2" fill="#000"/><rect x="753" y="387" width="1" height="36" fill="#000"/><rect x="751" y="392" width="5" height="15" fill="#000"/><rect x="752" y="393" width="3" height="13" fill="#fff"/><rect x="761" y="380" width="1" height="27" fill="#000"/><rect x="759" y="385" width="5" height="8" fill="#000"/><rect x="760" y="386" width="3" height="6" fill="#fff"/><rect x="769" y="365" width="1" height="25" fill="#000"/><rect x="767" y="371" width="5" height="15" fill="#000"/><rect x="768" y="372" width="3" height="13" fill="#fff"/><rect x="777" y="368" width="1" height="14" fill="#000"/><rect x="775" y="370" width="5" height="11" fill="#000"/><rect x="785" y="374" width="1" height="13" fill="#000"/><rect x="783" y="380" width="5" height="6" fill="#000"/><rect x="793" y="382" width="1" height="18" fill="#000"/><rect x="791" y="384" width="5" height="14" fill="#000"/><rect x="801" y="380" width="1" height="24" fill="#000"/><rect x="799" y="385" width="5" height="12" fill="#000"/><rect x="800" y="386" width="3" height="10" fill="#fff"/><rect x="809" y="374" width="1" height="14" fill="#000"/><rect x="807" y="380" width="5" height="7" fill="#000"/><rect x="808" y="381" width="3" height="5" fill="#fff"/><rect x="817" y="379" width="1" height="11" fill="#000"/><rect x="815" y="381" width="5" height="6" fill="#000"/><rect x="825" y="378" width="1" height="14" fill="#000"/><rect x="823" y="384" width="5" height="5" fill="#000"/><rect x="833" y="383" width="1" height="11" fill="#00ff00"/><rect x="831" y="386" width="5" height="1" fill="#00ff00"/><rect x="841" y="380" width="1" height="12" fill="#000"/><rect x="839" y="387" width="5" height="4" fill="#000"/><rect x="849" y="385" width="1" height="16" fill="#000"/><rect x="847" y="391" width="5" height="6" fill="#000"/><rect x="857" y="385" width="1" height="15" fill="#000"/><rect x="855" y="387" width="5" height="10" fill="#000"/><rect x="856" y="388" width="3" height="8" fill="#fff"/><rect x="865" y="387" width="1" height="16" fill="#000"/><rect x="863" y="387" width="5" height="11" fill="#000"/><rect x="873" y="394" width="1" height="18" fill="#000"/><rect x="871" y="396" width="5" height="11" fill="#000"/><rect x="881" y="403" width="1" height="17" fill="#000"/><rect x="879" y="405" width="5" height="10" fill="#000"/><rect x="889" y="396" width="1" height="20" fill="#000"/><rect x="887" y="400" width="5" height="15" fill="#000"/><rect x="888" y="401" width="3" height="13" fill="#fff"/><rect x="897" y="380" width="1" height="41" fill="#000"/><rect x="895" y="387" width="5" height="15" fill="#000"/><rect x="896" y="388" width="3" height="13" fill="#fff"/><rect x="905" y="380" width="1" height="40" fill="#000"/><rect x="903" y="387" width="5" height="25" fill="#000"/><rect x="913" y="407" width="1" height="25" fill="#000"/><rect x="911" y="412" width="5" height="13" fill="#000"/><rect x="921" y="407" width="1" height="24" fill="#000"/><rect x="919" y="415" width="5" height="10" fill="#000"/><rect x="920" y="416" width="3" height="8" fill="#fff"/><rect x="929" y="412" width="1" height="13" fill="#00ff00"/><rect x="927" y="416" width="5" height="1" fill="#00ff00"/><rect x="937" y="412" width="1" height="24" fill="#00ff00"/><rect x="935" y="415" width="5" height="1" fill="#00ff00"/><rect x="945" y="377" width="1" height="40" fill="#000"/><rect x="943" y="391" width="5" height="24" fill="#000"/><rect x="944" y="392" width="3" height="22" fill="#fff"/><rect x="953" y="386" width="1" height="26" fill="#000"/><rect x="951" y="390" width="5" height="7" fill="#000"/><rect x="961" y="385" width="1" height="16" fill="#000"/><rect x="959" y="389" width="5" height="9" fill="#000"/><rect x="960" y="390" width="3" height="7" fill="#fff"/><rect x="969" y="374" width="1" height="22" fill="#000"/><rect x="967" y="376" width="5" height="13" fill="#000"/><rect x="968" y="377" width="3" height="11" fill="#fff"/><rect x="977" y="252" width="1" height="129" fill="#000"/><rect x="975" y="271" width="5" height="107" fill="#000"/><rect x="976" y="272" width="3" height="105" fill="#fff"/><rect x="985" y="245" width="1" height="79" fill="#000"/><rect x="983" y="270" width="5" height="51" fill="#000"/><rect x="993" y="286" width="1" height="45" fill="#000"/><rect x="991" y="297" width="5" height="23" fill="#000"/><rect x="992" y="298" width="3" height="21" fill="#fff"/><rect x="1001" y="289" width="1" height="21" fill="#000"/><rect x="999" y="295" width="5" height="4" fill="#000"/><rect x="1000" y="296" width="3" height="2" fill="#fff"/><rect x="1009" y="277" width="1" height="27" fill="#000"/><rect x="1007" y="286" width="5" height="9" fill="#000"/><rect x="1008" y="287" width="3" height="7" fill="#fff"/><rect x="1017" y="282" width="1" height="13" fill="#000"/><rect x="1015" y="289" width="5" height="3" fill="#000"/><rect x="1025" y="274" width="1" height="33" fill="#000"/><rect x="1023" y="278" width="5" height="15" fill="#000"/><rect x="1024" y="279" width="3" height="13" fill="#fff"/><rect x="1033" y="269" width="1" height="19" fill="#000"/><rect x="1031" y="277" width="5" height="3" fill="#000"/><rect x="1041" y="233" width="1" height="49" fill="#000"/><rect x="1039" y="240" width="5" height="40" fill="#000"/><rect x="1040" y="241" width="3" height="38" fill="#fff"/><rect x="1049" y="237" width="1" height="31" fill="#000"/><rect x="1047" y="238" width="5" height="20" fill="#000"/><rect x="1057" y="239" width="1" height="21" fill="#000"/><rect x="1055" y="249" width="5" height="8" fill="#000"/><rect x="1056" y="250" width="3" height="6" fill="#fff"/><rect x="1065" y="241" width="1" height="15" fill="#000"/><rect x="1063" y="248" width="5" height="4" fill="#000"/><rect x="1073" y="246" width="1" height="14" fill="#000"/><rect x="1071" y="249" width="5" height="3" fill="#000"/><rect x="1081" y="238" width="1" height="26" fill="#00ff00"/><rect x="1079" y="249" width="5" height="1" fill="#00ff00"/><rect x="1089" y="212" width="1" height="45" fill="#000"/><rect x="1087" y="213" width="5" height="36" fill="#000"/><rect x="1088" y="214" width="3" height="34" fill="#fff"/><rect x="1097" y="213" width="1" height="41" fill="#000"/><rect x="1095" y="214" width="5" height="28" fill="#000"/><rect x="1105" y="232" width="1" height="33" fill="#000"/><rect x="1103" y="240" width="5" height="13" fill="#000"/><rect x="1113" y="216" width="1" height="39" fill="#000"/><rect x="1111" y="217" width="5" height="36" fill="#000"/><rect x="1112" y="218" width="3" height="34" fill="#fff"/><rect x="1121" y="204" width="1" height="38" fill="#000"/><rect x="1119" y="216" width="5" height="23" fill="#000"/><rect x="1129" y="217" width="1" height="29" fill="#000"/><rect x="1127" y="227" width="5" height="11" fill="#000"/><rect x="1128" y="228" width="3" height="9" fill="#fff"/><rect x="1137" y="203" width="1" height="30" fill="#000"/><rect x="1135" y="224" width="5" height="5" fill="#000"/><rect x="1136" y="225" width="3" height="3" fill="#fff"/><rect x="1145" y="213" width="1" height="35" fill="#000"/><rect x="1143" y="222" width="5" height="2" fill="#000"/><rect x="1153" y="209" width="1" height="45" fill="#000"/><rect x="1151" y="223" width="5" height="22" fill="#000"/><rect x="1161" y="236" width="1" height="25" fill="#000"/><rect x="1159" y="243" width="5" height="1" fill="#000"/><rect x="1169" y="231" width="1" height="15" fill="#000"/><rect x="1167" y="239" width="5" height="5" fill="#000"/><rect x="1168" y="240" width="3" height="3" fill="#fff"/><rect x="1177" y="222" width="1" height="21" fill="#000"/><rect x="1175" y="240" width="5" height="1" fill="#000"/><rect x="1185" y="233" width="1" height="14" fill="#000"/><rect x="1183" y="233" width="5" height="9" fill="#000"/><rect x="1184" y="234" width="3" height="7" fill="#fff"/><rect x="1193" y="218" width="1" height="21" fill="#000"/><rect x="1191" y="226" width="5" height="7" fill="#000"/><rect x="1192" y="227" width="3" height="5" fill="#fff"/><rect x="1201" y="209" width="1" height="17" fill="#000"/><rect x="1199" y="212" width="5" height="6" fill="#000"/><rect x="1209" y="211" width="1" height="17" fill="#000"/><rect x="1207" y="218" width="5" height="8" fill="#000"/></g></g><g transform="translate(49.5 556.5)"><path d="M0.2 -4.7L-6.2 4.3L-4.9 4.7L0 2.2z" fill="#dc143c"/><path d="M0.3 -4.5L6 4.5M5 2.2H0" fill="none" stroke="#dc143c" stroke-width="1"/></g><g transform="translate(88.3 544.8)"><path d="M0.2 -4.7L-6.2 4.3L-4.9 4.7L0 2.2z" fill="#dc143c"/><path d="M0.3 -4.5L6 4.5M5 2.2H0" fill="none" stroke="#dc143c" stroke-width="1"/></g><g transform="translate(137 484.5)"><path d="M0.2 -4.7L-6.2 4.3L-4.9 4.7L0 2.2z" fill="#dc143c"/><path d="M0.3 -4.5L6 4.5M5 2.2H0" fill="none" stroke="#dc143c" stroke-width="1"/></g><g transform="translate(185 360.5)"><path d="M0.2 -4.7L-6.2 4.3L-4.9 4.7L0 2.2z" fill="#dc143c"/><path d="M0.3 -4.5L6 4.5M5 2.2H0" fill="none" stroke="#dc143c" stroke-width="1"/></g><g transform="translate(241 373.4)"><path d="M0.2 -4.7L-6.2 4.3L-4.9 4.7L0 2.2z" fill="#dc143c"/><path d="M0.3 -4.5L6 4.5M5 2.2H0" fill="none" stroke="#dc143c" stroke-width="1"/></g><g transform="translate(273 373.4)"><path d="M0.2 -4.7L-6.2 4.3L-4.9 4.7L0 2.2z" fill="#dc143c"/><path d="M0.3 -4.5L6 4.5M5 2.2H0" fill="none" stroke="#dc143c" stroke-width="1"/></g><g transform="translate(329.5 354.5)"><path d="M0.2 -4.7L-6.2 4.3L-4.9 4.7L0 2.2z" fill="#dc143c"/><path d="M0.3 -4.5L6 4.5M5 2.2H0" fill="none" stroke="#dc143c" stroke-width="1"/></g><g transform="translate(377.3 370.8)"><path d="M0.2 -4.7L-6.2 4.3L-4.9 4.7L0 2.2z" fill="#dc143c"/><path d="M0.3 -4.5L6 4.5M5 2.2H0" fill="none" stroke="#dc143c" stroke-width="1"/></g><g transform="translate(409 383)"><path d="M0.2 -4.7L-6.2 4.3L-4.9 4.7L0 2.2z" fill="#dc143c"/><path d="M0.3 -4.5L6 4.5M5 2.2H0" fill="none" stroke="#dc143c" stroke-width="1"/></g><g transform="translate(440.7 390.2)"><path d="M0.2 -4.7L-6.2 4.3L-4.9 4.7L0 2.2z" fill="#dc143c"/><path d="M0.3 -4.5L6 4.5M5 2.2H0" fill="none" stroke="#dc143c" stroke-width="1"/></g><g transform="translate(497 405.5)"><path d="M0.2 -4.7L-6.2 4.3L-4.9 4.7L0 2.2z" fill="#dc143c"/><path d="M0.3 -4.5L6 4.5M5 2.2H0" fill="none" stroke="#dc143c" stroke-width="1"/></g><g transform="translate(545 357.5)"><path d="M0.2 -4.7L-6.2 4.3L-4.9 4.7L0 2.2z" fill="#dc143c"/><path d="M0.3 -4.5L6 4.5M5 2.2H0" fill="none" stroke="#dc143c" stroke-width="1"/></g><g transform="translate(665 405.3)"><path d="M0.2 -4.7L-6.2 4.3L-4.9 4.7L0 2.2z" fill="#dc143c"/><path d="M0.3 -4.5L6 4.5M5 2.2H0" fill="none" stroke="#dc143c" stroke-width="1"/></g><g transform="translate(768.8 353.4)"><path d="M0.2 -4.7L-6.2 4.3L-4.9 4.7L0 2.2z" fill="#dc143c"/><path d="M0.3 -4.5L6 4.5M5 2.2H0" fill="none" stroke="#dc143c" stroke-width="1"/></g><g transform="translate(809.3 365.9)"><path d="M0.2 -4.7L-6.2 4.3L-4.9 4.7L0 2.2z" fill="#dc143c"/><path d="M0.3 -4.5L6 4.5M5 2.2H0" fill="none" stroke="#dc143c" stroke-width="1"/></g><g transform="translate(905.1 370.4)"><path d="M0.2 -4.7L-6.2 4.3L-4.9 4.7L0 2.2z" fill="#dc143c"/><path d="M0.3 -4.5L6 4.5M5 2.2H0" fill="none" stroke="#dc143c" stroke-width="1"/></g><g transform="translate(945 367.8)"><path d="M0.2 -4.7L-6.2 4.3L-4.9 4.7L0 2.2z" fill="#dc143c"/><path d="M0.3 -4.5L6 4.5M5 2.2H0" fill="none" stroke="#dc143c" stroke-width="1"/></g><g transform="translate(985.2 236)"><path d="M0.2 -4.7L-6.2 4.3L-4.9 4.7L0 2.2z" fill="#dc143c"/><path d="M0.3 -4.5L6 4.5M5 2.2H0" fill="none" stroke="#dc143c" stroke-width="1"/></g><g transform="translate(1040.8 223.8)"><path d="M0.2 -4.7L-6.2 4.3L-4.9 4.7L0 2.2z" fill="#dc143c"/><path d="M0.3 -4.5L6 4.5M5 2.2H0" fill="none" stroke="#dc143c" stroke-width="1"/></g><g transform="translate(1088.9 202.6)"><path d="M0.2 -4.7L-6.2 4.3L-4.9 4.7L0 2.2z" fill="#dc143c"/><path d="M0.3 -4.5L6 4.5M5 2.2H0" fill="none" stroke="#dc143c" stroke-width="1"/></g><g transform="translate(1137.2 193.8)"><path d="M0.2 -4.7L-6.2 4.3L-4.9 4.7L0 2.2z" fill="#dc143c"/><path d="M0.3 -4.5L6 4.5M5 2.2H0" fill="none" stroke="#dc143c" stroke-width="1"/></g><g transform="translate(33.4 600.4)"><path d="M-0.2 4.7L6.2 -4.3L4.9 -4.7L0 -2.2z" fill="#dc143c"/><path d="M-0.3 4.5L-6 -4.5M-5 -2.2H0" fill="none" stroke="#dc143c" stroke-width="1"/></g><g transform="translate(113.2 577)"><path d="M-0.2 4.7L6.2 -4.3L4.9 -4.7L0 -2.2z" fill="#dc143c"/><path d="M-0.3 4.5L-6 -4.5M-5 -2.2H0" fill="none" stroke="#dc143c" stroke-width="1"/></g><g transform="translate(160.5 550.3)"><path d="M-0.2 4.7L6.2 -4.3L4.9 -4.7L0 -2.2z" fill="#dc143c"/><path d="M-0.3 4.5L-6 -4.5M-5 -2.2H0" fill="none" stroke="#dc143c" stroke-width="1"/></g><g transform="translate(225 427)"><path d="M-0.2 4.7L6.2 -4.3L4.9 -4.7L0 -2.2z" fill="#dc143c"/><path d="M-0.3 4.5L-6 -4.5M-5 -2.2H0" fill="none" stroke="#dc143c" stroke-width="1"/></g><g transform="translate(296.5 409.6)"><path d="M-0.2 4.7L6.2 -4.3L4.9 -4.7L0 -2.2z" fill="#dc143c"/><path d="M-0.3 4.5L-6 -4.5M-5 -2.2H0" fill="none" stroke="#dc143c" stroke-width="1"/></g><g transform="translate(352.8 417.6)"><path d="M-0.2 4.7L6.2 -4.3L4.9 -4.7L0 -2.2z" fill="#dc143c"/><path d="M-0.3 4.5L-6 -4.5M-5 -2.2H0" fill="none" stroke="#dc143c" stroke-width="1"/></g><g transform="translate(384.7 442.4)"><path d="M-0.2 4.7L6.2 -4.3L4.9 -4.7L0 -2.2z" fill="#dc143c"/><path d="M-0.3 4.5L-6 -4.5M-5 -2.2H0" fill="none" stroke="#dc143c" stroke-width="1"/></g><g transform="translate(433 422.3)"><path d="M-0.2 4.7L6.2 -4.3L4.9 -4.7L0 -2.2z" fill="#dc143c"/><path d="M-0.3 4.5L-6 -4.5M-5 -2.2H0" fill="none" stroke="#dc143c" stroke-width="1"/></g><g transform="translate(464.9 475.4)"><path d="M-0.2 4.7L6.2 -4.3L4.9 -4.7L0 -2.2z" fill="#dc143c"/><path d="M-0.3 4.5L-6 -4.5M-5 -2.2H0" fill="none" stroke="#dc143c" stroke-width="1"/></g><g transform="translate(505 466.4)"><path d="M-0.2 4.7L6.2 -4.3L4.9 -4.7L0 -2.2z" fill="#dc143c"/><path d="M-0.3 4.5L-6 -4.5M-5 -2.2H0" fill="none" stroke="#dc143c" stroke-width="1"/></g><g transform="translate(569.2 469.3)"><path d="M-0.2 4.7L6.2 -4.3L4.9 -4.7L0 -2.2z" fill="#dc143c"/><path d="M-0.3 4.5L-6 -4.5M-5 -2.2H0" fill="none" stroke="#dc143c" stroke-width="1"/></g><g transform="translate(633.2 496.7)"><path d="M-0.2 4.7L6.2 -4.3L4.9 -4.7L0 -2.2z" fill="#dc143c"/><path d="M-0.3 4.5L-6 -4.5M-5 -2.2H0" fill="none" stroke="#dc143c" stroke-width="1"/></g><g transform="translate(713 466.8)"><path d="M-0.2 4.7L6.2 -4.3L4.9 -4.7L0 -2.2z" fill="#dc143c"/><path d="M-0.3 4.5L-6 -4.5M-5 -2.2H0" fill="none" stroke="#dc143c" stroke-width="1"/></g><g transform="translate(744.8 431)"><path d="M-0.2 4.7L6.2 -4.3L4.9 -4.7L0 -2.2z" fill="#dc143c"/><path d="M-0.3 4.5L-6 -4.5M-5 -2.2H0" fill="none" stroke="#dc143c" stroke-width="1"/></g><g transform="translate(800 412.2)"><path d="M-0.2 4.7L6.2 -4.3L4.9 -4.7L0 -2.2z" fill="#dc143c"/><path d="M-0.3 4.5L-6 -4.5M-5 -2.2H0" fill="none" stroke="#dc143c" stroke-width="1"/></g><g transform="translate(913.1 439.3)"><path d="M-0.2 4.7L6.2 -4.3L4.9 -4.7L0 -2.2z" fill="#dc143c"/><path d="M-0.3 4.5L-6 -4.5M-5 -2.2H0" fill="none" stroke="#dc143c" stroke-width="1"/></g><g transform="translate(937 443.2)"><path d="M-0.2 4.7L6.2 -4.3L4.9 -4.7L0 -2.2z" fill="#dc143c"/><path d="M-0.3 4.5L-6 -4.5M-5 -2.2H0" fill="none" stroke="#dc143c" stroke-width="1"/></g><g transform="translate(1024.7 314.1)"><path d="M-0.2 4.7L6.2 -4.3L4.9 -4.7L0 -2.2z" fill="#dc143c"/><path d="M-0.3 4.5L-6 -4.5M-5 -2.2H0" fill="none" stroke="#dc143c" stroke-width="1"/></g><g transform="translate(1081.1 270.5)"><path d="M-0.2 4.7L6.2 -4.3L4.9 -4.7L0 -2.2z" fill="#dc143c"/><path d="M-0.3 4.5L-6 -4.5M-5 -2.2H0" fill="none" stroke="#dc143c" stroke-width="1"/></g><g transform="translate(1103.4 270.5)"><path d="M-0.2 4.7L6.2 -4.3L4.9 -4.7L0 -2.2z" fill="#dc143c"/><path d="M-0.3 4.5L-6 -4.5M-5 -2.2H0" fill="none" stroke="#dc143c" stroke-width="1"/></g><g transform="translate(1161 267.4)"><path d="M-0.2 4.7L6.2 -4.3L4.9 -4.7L0 -2.2z" fill="#dc143c"/><path d="M-0.3 4.5L-6 -4.5M-5 -2.2H0" fill="none" stroke="#dc143c" stroke-width="1"/></g><g transform="translate(1185.2 252.9)"><path d="M-0.2 4.7L6.2 -4.3L4.9 -4.7L0 -2.2z" fill="#dc143c"/><path d="M-0.3 4.5L-6 -4.5M-5 -2.2H0" fill="none" stroke="#dc143c" stroke-width="1"/></g><g shape-rendering="crispEdges"><polyline clip-path="url(#cc)" points="9,599 329.4,365 465.5,466.1 545.4,367.7 633.3,488.2 769.4,363.7 937.2,434.6 1121.2,203.3" fill="none" stroke="#ff0000" stroke-width="2.2" stroke-linejoin="round"/><polyline clip-path="url(#cc)" points="9,557.3 26,558.3 40,561.4 57.6,563.4 74,562.6 97,562 113,564 121,567 137.5,559.4 161,553.2 165,550 170,544.5 177.1,536.3 188.8,522.2 200.5,509.3 212.3,495.2 226.3,481.2 233.7,473.6 241,464 265,438 275.7,428.4 288.6,420.8 306,404.7 314.5,400.4 335,397 369.6,393.3 390,396.2 406,397.2 421,398 432,399 446,400 455,401.2 463,405.3 470,408.9 475.9,412.3 485.2,414.6 495.8,416.6 504,419.3 511,421.6 519.3,423.4 531,423.2 535.7,422 542.7,421.3 563.8,421.3 569.7,422.5 580.2,424 587.3,425.7 594.3,427.1 601.3,428.1 606,427.5 620.8,427.4 640.2,431.9 665,432.3 672.6,432.7 688.8,438.1 703.9,441.7 714.7,441.7 744.8,435.9 766.4,426.2 776.7,418.9 788.5,412.5 800.2,408.4 811.9,404.8 823.6,401.3 835.4,397.2 847.1,393.1 854.1,390.8 861.2,389.9 876.4,390.2 882.3,390.8 889.3,390.2 899.9,390.2 905.7,392.3 915,394.6 918.5,396.2 937.9,399.5 961.6,401.6 970.2,400.5 978.8,393 986,389.8 997.9,382.2 1008.7,374.7 1017.3,367.2 1028.1,357.5 1036.7,348.8 1049.7,333.8 1060.4,321.9 1071.2,310 1082,297.1 1092.8,284.2 1103.5,273.4 1114.3,262.6 1122.9,260.5 1133,254.6 1143.1,248.6 1160.4,243.2 1173.3,238.9 1190.6,236.7 1210,233.5" fill="none" stroke="#0000ff" stroke-width="3.2" stroke-linejoin="round" stroke-linecap="round"/></g><path d="M1213 150.5h5v6h2.5l-5 5l-5-5h2.5z" fill="#fff" stroke="#ff0000" stroke-width="1"/><path d="M1217.5 278.5l5 5h-2.5v6.5h-5v-6.5h-2.5z" fill="#fff" stroke="#ff0000" stroke-width="1"/><path d="M1217.5 336l5 5h-2.5v6.5h-5v-6.5h-2.5z" fill="#fff" stroke="#ff0000" stroke-width="1"/><g shape-rendering="crispEdges"><rect x="9" y="140" width="1224" height="2" fill="#0000cc"/><rect x="9" y="184" width="1224" height="2" fill="#0000cc"/><rect x="9" y="287" width="1224" height="2" fill="#0000cc"/><rect x="9" y="348" width="1224" height="2" fill="#0000cc"/><rect x="8" y="109" width="1226" height="1" fill="#000"/><rect x="8" y="677" width="1226" height="1" fill="#000"/><rect x="8" y="109" width="1" height="569" fill="#000"/><rect x="1233" y="109" width="1" height="569" fill="#000"/><rect x="1234" y="115" width="2" height="1" fill="#000"/><rect x="1234" y="150" width="2" height="1" fill="#000"/><rect x="1234" y="185" width="2" height="1" fill="#000"/><rect x="1234" y="219" width="2" height="1" fill="#000"/><rect x="1234" y="254" width="2" height="1" fill="#000"/><rect x="1234" y="289" width="2" height="1" fill="#000"/><rect x="1234" y="324" width="2" height="1" fill="#000"/><rect x="1234" y="359" width="2" height="1" fill="#000"/><rect x="1234" y="393" width="2" height="1" fill="#000"/><rect x="1234" y="428" width="2" height="1" fill="#000"/><rect x="1234" y="463" width="2" height="1" fill="#000"/><rect x="1234" y="498" width="2" height="1" fill="#000"/><rect x="1234" y="533" width="2" height="1" fill="#000"/><rect x="1234" y="568" width="2" height="1" fill="#000"/><rect x="1234" y="602" width="2" height="1" fill="#000"/><rect x="1234" y="637" width="2" height="1" fill="#000"/><rect x="1234" y="672" width="2" height="1" fill="#000"/><rect x="9" y="678" width="1" height="3" fill="#000"/><rect x="73" y="678" width="1" height="3" fill="#000"/><rect x="137" y="678" width="1" height="3" fill="#000"/><rect x="201" y="678" width="1" height="3" fill="#000"/><rect x="265" y="678" width="1" height="3" fill="#000"/><rect x="329" y="678" width="1" height="3" fill="#000"/><rect x="393" y="678" width="1" height="3" fill="#000"/><rect x="457" y="678" width="1" height="3" fill="#000"/><rect x="521" y="678" width="1" height="3" fill="#000"/><rect x="585" y="678" width="1" height="3" fill="#000"/><rect x="649" y="678" width="1" height="3" fill="#000"/><rect x="713" y="678" width="1" height="3" fill="#000"/><rect x="777" y="678" width="1" height="3" fill="#000"/><rect x="841" y="678" width="1" height="3" fill="#000"/><rect x="905" y="678" width="1" height="3" fill="#000"/><rect x="969" y="678" width="1" height="3" fill="#000"/><rect x="1033" y="678" width="1" height="3" fill="#000"/><rect x="1097" y="678" width="1" height="3" fill="#000"/><rect x="1161" y="678" width="1" height="3" fill="#000"/><rect x="1236" y="135" width="34" height="11" fill="#0000cc"/><rect x="1236" y="179" width="34" height="11" fill="#0000cc"/><rect x="1236" y="282" width="34" height="11" fill="#0000cc"/><rect x="1236" y="343" width="34" height="11" fill="#0000cc"/><rect x="1236" y="219" width="34" height="11" fill="#000"/></g><path d="M11.5 115h8l-4 4.3z" fill="#000"/></svg>
<div style="left:22.5px;top:112px;width:178px;height:11px;background:#fff;"></div>
<div style="left:22.5px;top:113px;width:51.5px;height:10px;background:#fff;"></div>
<div style="left:79.5px;top:113px;width:28.2px;height:10px;background:#fff;"></div>
<div style="left:111px;top:113px;width:28px;height:10px;background:#fff;"></div>
<div style="left:142px;top:113px;width:28.2px;height:10px;background:#fff;"></div>
<div style="left:173px;top:113px;width:28.2px;height:10px;background:#fff;"></div>
<div style="left:1236px;top:219px;width:34px;height:11px;background:#000;"></div>
<div style="left:88px;top:700px;width:1px;height:13px;background:#555;"></div>
<div style="left:168px;top:700px;width:1px;height:13px;background:#555;"></div>
<div style="left:248px;top:700px;width:1px;height:13px;background:#555;"></div>
<div style="left:324px;top:700px;width:1px;height:13px;background:#555;"></div>
<div style="left:404px;top:700px;width:1px;height:13px;background:#555;"></div>
<div style="left:488px;top:700px;width:1px;height:13px;background:#555;"></div>
<div style="left:576px;top:700px;width:1px;height:13px;background:#555;"></div>
<div style="left:812px;top:700px;width:1px;height:13px;background:#555;"></div>
<div style="left:4px;top:698px;width:2px;height:19px;background:#777;"></div>
<div style="left:656px;top:697px;width:74px;height:17px;background:#fff;border:1px solid #000;border-top:none;box-shadow:1px 1px 0 #000;"></div>
<svg style="left:1247px;top:704px;" width="5" height="7" viewBox="0 0 5 7"><path d="M4 0.5v6L0.5 3.5z" fill="#9a9a9a"/></svg>
<svg style="left:1264px;top:704px;" width="5" height="7" viewBox="0 0 5 7"><path d="M0.5 0.5v6L4 3.5z" fill="#9a9a9a"/></svg>
<div style="left:554px;top:721px;width:1px;height:15px;background:#a0a0a0;"></div><div style="left:555px;top:721px;width:1px;height:15px;background:#fff;"></div>
<div style="left:663px;top:721px;width:1px;height:15px;background:#a0a0a0;"></div><div style="left:664px;top:721px;width:1px;height:15px;background:#fff;"></div>
<div style="left:764px;top:721px;width:1px;height:15px;background:#a0a0a0;"></div><div style="left:765px;top:721px;width:1px;height:15px;background:#fff;"></div>
<div style="left:836px;top:721px;width:1px;height:15px;background:#a0a0a0;"></div><div style="left:837px;top:721px;width:1px;height:15px;background:#fff;"></div>
<div style="left:907px;top:721px;width:1px;height:15px;background:#a0a0a0;"></div><div style="left:908px;top:721px;width:1px;height:15px;background:#fff;"></div>
<div style="left:977px;top:721px;width:1px;height:15px;background:#a0a0a0;"></div><div style="left:978px;top:721px;width:1px;height:15px;background:#fff;"></div>
<div style="left:1047px;top:721px;width:1px;height:15px;background:#a0a0a0;"></div><div style="left:1048px;top:721px;width:1px;height:15px;background:#fff;"></div>
<div style="left:1112px;top:721px;width:1px;height:15px;background:#a0a0a0;"></div><div style="left:1113px;top:721px;width:1px;height:15px;background:#fff;"></div>
<div style="left:1119px;top:724px;width:2px;height:8.5px;background:#5a8a10;"></div><div style="left:1119px;top:733.5px;width:2px;height:1.5px;background:#b01010;"></div><div style="left:1122px;top:724px;width:2px;height:7.35px;background:#5a8a10;"></div><div style="left:1122px;top:732.35px;width:2px;height:2.65px;background:#b01010;"></div><div style="left:1125px;top:724px;width:2px;height:6.2px;background:#5a8a10;"></div><div style="left:1125px;top:731.2px;width:2px;height:3.8px;background:#b01010;"></div><div style="left:1128px;top:724px;width:2px;height:5.05px;background:#5a8a10;"></div><div style="left:1128px;top:730.05px;width:2px;height:4.95px;background:#b01010;"></div><div style="left:1131px;top:724px;width:2px;height:3.9px;background:#5a8a10;"></div><div style="left:1131px;top:728.9px;width:2px;height:6.1px;background:#b01010;"></div><div style="left:1134px;top:724px;width:2px;height:2.75px;background:#5a8a10;"></div><div style="left:1134px;top:727.75px;width:2px;height:7.25px;background:#b01010;"></div><div style="left:1137px;top:724px;width:2px;height:1.6px;background:#5a8a10;"></div><div style="left:1137px;top:726.6px;width:2px;height:8.4px;background:#b01010;"></div><div style="left:1140px;top:724px;width:2px;height:0.45px;background:#5a8a10;"></div><div style="left:1140px;top:725.45px;width:2px;height:9.55px;background:#b01010;"></div>
<svg style="left:1261px;top:725px;" width="13" height="13" viewBox="0 0 13 13"><path d="M12 1L1 12M12 5L5 12M12 9L9 12" stroke="#aaa" stroke-width="1.2"/><path d="M13 2L2 13M13 6L6 13M13 10L10 13" stroke="#fff" stroke-width="1"/></svg>
<div id="tx">
<span class="t" id="t0" style="left:27.00px;top:8.84px;font-size:12px;line-height:16px;color:#fff;font-weight:bold;letter-spacing:0.036px;text-shadow:0 0 2px #000,0 0 2px #000;">142420:</span>
<span class="t" id="t1" style="left:75.80px;top:8.84px;font-size:12px;line-height:16px;color:#fff;font-weight:bold;letter-spacing:0.027px;text-shadow:0 0 2px #000,0 0 2px #000;">MetaTrader4</span>
<span class="t" id="t2" style="left:152.00px;top:8.84px;font-size:12px;line-height:16px;color:#fff;font-weight:bold;letter-spacing:0.000px;text-shadow:0 0 2px #000,0 0 2px #000;">-</span>
<span class="t" id="t3" style="left:160.30px;top:8.84px;font-size:12px;line-height:16px;color:#fff;font-weight:bold;letter-spacing:-0.316px;text-shadow:0 0 2px #000,0 0 2px #000;">RoboForex</span>
<span class="t" id="t4" style="left:224.80px;top:8.84px;font-size:12px;line-height:16px;color:#fff;font-weight:bold;letter-spacing:0.000px;text-shadow:0 0 2px #000,0 0 2px #000;">-</span>
<span class="t" id="t5" style="left:233.00px;top:8.84px;font-size:12px;line-height:16px;color:#fff;font-weight:bold;letter-spacing:-0.169px;text-shadow:0 0 2px #000,0 0 2px #000;">[EURJPY,H1]</span>
<span class="t" id="t6" style="left:31.00px;top:34.19px;font-size:11px;line-height:14px;color:#000;letter-spacing:0.238px;">Файл</span>
<span class="t" id="t7" style="left:75.00px;top:34.19px;font-size:11px;line-height:14px;color:#000;letter-spacing:-0.302px;">Вид</span>
<span class="t" id="t8" style="left:110.00px;top:34.19px;font-size:11px;line-height:14px;color:#000;letter-spacing:0.230px;">Вставка</span>
<span class="t" id="t9" style="left:168.50px;top:34.19px;font-size:11px;line-height:14px;color:#000;letter-spacing:-0.033px;">Графики</span>
<span class="t" id="t10" style="left:228.50px;top:34.19px;font-size:11px;line-height:14px;color:#000;letter-spacing:-0.195px;">Сервис</span>
<span class="t" id="t11" style="left:281.50px;top:34.19px;font-size:11px;line-height:14px;color:#000;letter-spacing:-0.016px;">Окно</span>
<span class="t" id="t12" style="left:323.50px;top:34.19px;font-size:11px;line-height:14px;color:#000;letter-spacing:-0.094px;">Справка</span>
<span class="t" id="t13" style="left:263.50px;top:59.19px;font-size:11px;line-height:14px;color:#000;letter-spacing:-0.145px;">Новый Ордер</span>
<span class="t" id="t14" style="left:392.50px;top:59.19px;font-size:11px;line-height:14px;color:#000;letter-spacing:0.083px;">Советники</span>
<span class="t" id="t15" style="left:1257.50px;top:57.19px;font-size:11px;line-height:14px;color:#fff;letter-spacing:-0.125px;">4</span>
<span class="t" id="t16" style="left:502.00px;top:94.67px;font-size:7px;line-height:9px;color:#444;font-weight:bold;">E</span>
<span class="t" id="t17" style="left:529.70px;top:94.67px;font-size:7px;line-height:9px;color:#444;font-weight:bold;">F</span>
<span class="t" id="t18" style="left:550.50px;top:85.00px;font-size:13px;line-height:17px;color:#666;font-weight:bold;letter-spacing:-0.891px;">A</span>
<span class="t" id="t19" style="left:578.70px;top:85.84px;font-size:12px;line-height:16px;color:#555;font-weight:bold;letter-spacing:0.656px;">T</span>
<span class="t" id="t20" style="left:654.00px;top:86.53px;font-size:10px;line-height:13px;color:#444;letter-spacing:-0.203px;">M1</span>
<span class="t" id="t21" style="left:682.00px;top:86.53px;font-size:10px;line-height:13px;color:#444;letter-spacing:-0.453px;">M5</span>
<span class="t" id="t22" style="left:708.50px;top:86.53px;font-size:10px;line-height:13px;color:#444;letter-spacing:-0.484px;">M15</span>
<span class="t" id="t23" style="left:736.50px;top:86.53px;font-size:10px;line-height:13px;color:#444;letter-spacing:-0.484px;">M30</span>
<span class="t" id="t24" style="left:768.00px;top:86.53px;font-size:10px;line-height:13px;color:#444;letter-spacing:-0.648px;">H1</span>
<span class="t" id="t25" style="left:795.00px;top:86.53px;font-size:10px;line-height:13px;color:#444;letter-spacing:-0.398px;">H4</span>
<span class="t" id="t26" style="left:823.50px;top:86.53px;font-size:10px;line-height:13px;color:#444;letter-spacing:-0.398px;">D1</span>
<span class="t" id="t27" style="left:850.50px;top:86.53px;font-size:10px;line-height:13px;color:#444;letter-spacing:0.250px;">W1</span>
<span class="t" id="t28" style="left:877.50px;top:86.53px;font-size:10px;line-height:13px;color:#444;letter-spacing:-0.281px;">MN</span>
<span class="t" id="t29" style="left:23.50px;top:111.07px;font-size:9.9px;line-height:13px;color:#000;letter-spacing:-0.396px;-webkit-text-stroke:0.15px;">EURJPY,H1</span>
<span class="t" id="t30" style="left:80.50px;top:111.07px;font-size:9.9px;line-height:13px;color:#000;letter-spacing:-0.670px;-webkit-text-stroke:0.15px;">132.06</span>
<span class="t" id="t31" style="left:112.00px;top:111.07px;font-size:9.9px;line-height:13px;color:#000;letter-spacing:-0.703px;-webkit-text-stroke:0.15px;">132.15</span>
<span class="t" id="t32" style="left:143.00px;top:111.07px;font-size:9.9px;line-height:13px;color:#000;letter-spacing:-0.670px;-webkit-text-stroke:0.15px;">131.96</span>
<span class="t" id="t33" style="left:174.00px;top:111.07px;font-size:9.9px;line-height:13px;color:#000;letter-spacing:-0.670px;-webkit-text-stroke:0.15px;">131.99</span>
<span class="t" id="t34" style="left:1239.50px;top:108.07px;font-size:9.9px;line-height:13px;color:#000;letter-spacing:-0.586px;-webkit-text-stroke:0.15px;">133.25</span>
<span class="t" id="t35" style="left:1239.50px;top:143.07px;font-size:9.9px;line-height:13px;color:#000;letter-spacing:-0.586px;-webkit-text-stroke:0.15px;">132.85</span>
<span class="t" id="t36" style="left:1239.50px;top:212.07px;font-size:9.9px;line-height:13px;color:#000;letter-spacing:-0.586px;-webkit-text-stroke:0.15px;">132.05</span>
<span class="t" id="t37" style="left:1239.50px;top:247.07px;font-size:9.9px;line-height:13px;color:#000;letter-spacing:-0.586px;-webkit-text-stroke:0.15px;">131.65</span>
<span class="t" id="t38" style="left:1239.50px;top:317.07px;font-size:9.9px;line-height:13px;color:#000;letter-spacing:-0.586px;-webkit-text-stroke:0.15px;">130.85</span>
<span class="t" id="t39" style="left:1239.50px;top:352.07px;font-size:9.9px;line-height:13px;color:#000;letter-spacing:-0.586px;-webkit-text-stroke:0.15px;">130.45</span>
<span class="t" id="t40" style="left:1239.50px;top:386.07px;font-size:9.9px;line-height:13px;color:#000;letter-spacing:-0.586px;-webkit-text-stroke:0.15px;">130.05</span>
<span class="t" id="t41" style="left:1239.50px;top:421.07px;font-size:9.9px;line-height:13px;color:#000;letter-spacing:-0.586px;-webkit-text-stroke:0.15px;">129.65</span>
<span class="t" id="t42" style="left:1239.50px;top:456.07px;font-size:9.9px;line-height:13px;color:#000;letter-spacing:-0.586px;-webkit-text-stroke:0.15px;">129.25</span>
<span class="t" id="t43" style="left:1239.50px;top:491.07px;font-size:9.9px;line-height:13px;color:#000;letter-spacing:-0.586px;-webkit-text-stroke:0.15px;">128.85</span>
<span class="t" id="t44" style="left:1239.50px;top:526.07px;font-size:9.9px;line-height:13px;color:#000;letter-spacing:-0.586px;-webkit-text-stroke:0.15px;">128.45</span>
<span class="t" id="t45" style="left:1239.50px;top:561.07px;font-size:9.9px;line-height:13px;color:#000;letter-spacing:-0.586px;-webkit-text-stroke:0.15px;">128.05</span>
<span class="t" id="t46" style="left:1239.50px;top:595.07px;font-size:9.9px;line-height:13px;color:#000;letter-spacing:-0.586px;-webkit-text-stroke:0.15px;">127.65</span>
<span class="t" id="t47" style="left:1239.50px;top:630.07px;font-size:9.9px;line-height:13px;color:#000;letter-spacing:-0.586px;-webkit-text-stroke:0.15px;">127.25</span>
<span class="t" id="t48" style="left:1239.50px;top:665.07px;font-size:9.9px;line-height:13px;color:#000;letter-spacing:-0.586px;-webkit-text-stroke:0.15px;">126.85</span>
<span class="t" id="t49" style="left:1239.50px;top:134.07px;font-size:9.9px;line-height:13px;color:#fff;letter-spacing:-0.586px;-webkit-text-stroke:0.15px;">132.94</span>
<span class="t" id="t50" style="left:1239.50px;top:178.07px;font-size:9.9px;line-height:13px;color:#fff;letter-spacing:-0.586px;-webkit-text-stroke:0.15px;">132.44</span>
<span class="t" id="t51" style="left:1239.50px;top:219.07px;font-size:9.9px;line-height:13px;color:#fff;letter-spacing:-0.586px;-webkit-text-stroke:0.15px;">131.99</span>
<span class="t" id="t52" style="left:1239.50px;top:281.07px;font-size:9.9px;line-height:13px;color:#fff;letter-spacing:-0.586px;-webkit-text-stroke:0.15px;">131.26</span>
<span class="t" id="t53" style="left:1239.50px;top:342.07px;font-size:9.9px;line-height:13px;color:#fff;letter-spacing:-0.586px;-webkit-text-stroke:0.15px;">130.56</span>
<span class="t" id="t54" style="left:7.80px;top:680.07px;font-size:9.9px;line-height:13px;color:#000;letter-spacing:-0.261px;-webkit-text-stroke:0.15px;">2 May 2013</span>
<span class="t" id="t55" style="left:71.80px;top:680.07px;font-size:9.9px;line-height:13px;color:#000;letter-spacing:-0.214px;-webkit-text-stroke:0.15px;">3 May 03:00</span>
<span class="t" id="t56" style="left:135.80px;top:680.07px;font-size:9.9px;line-height:13px;color:#000;letter-spacing:-0.148px;-webkit-text-stroke:0.15px;">3 May 11:00</span>
<span class="t" id="t57" style="left:199.80px;top:680.07px;font-size:9.9px;line-height:13px;color:#000;letter-spacing:-0.214px;-webkit-text-stroke:0.15px;">3 May 19:00</span>
<span class="t" id="t58" style="left:263.80px;top:680.07px;font-size:9.9px;line-height:13px;color:#000;letter-spacing:-0.214px;-webkit-text-stroke:0.15px;">6 May 03:00</span>
<span class="t" id="t59" style="left:327.80px;top:680.07px;font-size:9.9px;line-height:13px;color:#000;letter-spacing:-0.148px;-webkit-text-stroke:0.15px;">6 May 11:00</span>
<span class="t" id="t60" style="left:391.80px;top:680.07px;font-size:9.9px;line-height:13px;color:#000;letter-spacing:-0.214px;-webkit-text-stroke:0.15px;">6 May 19:00</span>
<span class="t" id="t61" style="left:455.80px;top:680.07px;font-size:9.9px;line-height:13px;color:#000;letter-spacing:-0.214px;-webkit-text-stroke:0.15px;">7 May 03:00</span>
<span class="t" id="t62" style="left:519.80px;top:680.07px;font-size:9.9px;line-height:13px;color:#000;letter-spacing:-0.148px;-webkit-text-stroke:0.15px;">7 May 11:00</span>
<span class="t" id="t63" style="left:583.80px;top:680.07px;font-size:9.9px;line-height:13px;color:#000;letter-spacing:-0.214px;-webkit-text-stroke:0.15px;">7 May 19:00</span>
<span class="t" id="t64" style="left:647.80px;top:680.07px;font-size:9.9px;line-height:13px;color:#000;letter-spacing:-0.214px;-webkit-text-stroke:0.15px;">8 May 03:00</span>
<span class="t" id="t65" style="left:711.80px;top:680.07px;font-size:9.9px;line-height:13px;color:#000;letter-spacing:-0.148px;-webkit-text-stroke:0.15px;">8 May 11:00</span>
<span class="t" id="t66" style="left:775.80px;top:680.07px;font-size:9.9px;line-height:13px;color:#000;letter-spacing:-0.214px;-webkit-text-stroke:0.15px;">8 May 19:00</span>
<span class="t" id="t67" style="left:839.80px;top:680.07px;font-size:9.9px;line-height:13px;color:#000;letter-spacing:-0.214px;-webkit-text-stroke:0.15px;">9 May 03:00</span>
<span class="t" id="t68" style="left:903.80px;top:680.07px;font-size:9.9px;line-height:13px;color:#000;letter-spacing:-0.148px;-webkit-text-stroke:0.15px;">9 May 11:00</span>
<span class="t" id="t69" style="left:967.80px;top:680.07px;font-size:9.9px;line-height:13px;color:#000;letter-spacing:-0.214px;-webkit-text-stroke:0.15px;">9 May 19:00</span>
<span class="t" id="t70" style="left:1031.80px;top:680.07px;font-size:9.9px;line-height:13px;color:#000;letter-spacing:-0.270px;-webkit-text-stroke:0.15px;">10 May 03:00</span>
<span class="t" id="t71" style="left:1095.80px;top:680.07px;font-size:9.9px;line-height:13px;color:#000;letter-spacing:-0.209px;-webkit-text-stroke:0.15px;">10 May 11:00</span>
<span class="t" id="t72" style="left:1159.80px;top:680.07px;font-size:9.9px;line-height:13px;color:#000;letter-spacing:-0.270px;-webkit-text-stroke:0.15px;">10 May 19:00</span>
<span class="t" id="t73" style="left:18.00px;top:699.19px;font-size:11px;line-height:14px;color:#77776e;letter-spacing:-0.786px;">EURUSD,H1</span>
<span class="t" id="t74" style="left:99.50px;top:699.19px;font-size:11px;line-height:14px;color:#77776e;letter-spacing:-0.953px;">GBPUSD,H1</span>
<span class="t" id="t75" style="left:178.70px;top:699.19px;font-size:11px;line-height:14px;color:#77776e;letter-spacing:-0.809px;">AUDUSD,H1</span>
<span class="t" id="t76" style="left:258.00px;top:699.19px;font-size:11px;line-height:14px;color:#77776e;letter-spacing:-0.679px;">USDJPY,H1</span>
<span class="t" id="t77" style="left:335.50px;top:699.19px;font-size:11px;line-height:14px;color:#77776e;letter-spacing:-0.750px;">GBPCHF,H1</span>
<span class="t" id="t78" style="left:413.70px;top:699.19px;font-size:11px;line-height:14px;color:#77776e;letter-spacing:-0.625px;">GBPJPY,Daily</span>
<span class="t" id="t79" style="left:498.00px;top:699.19px;font-size:11px;line-height:14px;color:#77776e;letter-spacing:-0.571px;">EURGBP,Daily</span>
<span class="t" id="t80" style="left:586.00px;top:699.19px;font-size:11px;line-height:14px;color:#77776e;letter-spacing:-0.717px;">NZDUSD,H1</span>
<span class="t" id="t81" style="left:666.00px;top:699.19px;font-size:11px;line-height:14px;color:#000;letter-spacing:-0.623px;">EURJPY,H1</span>
<span class="t" id="t82" style="left:742.50px;top:699.19px;font-size:11px;line-height:14px;color:#77776e;letter-spacing:-0.675px;">USDCAD,H4</span>
<span class="t" id="t83" style="left:6.00px;top:721.69px;font-size:11px;line-height:14px;color:#000;letter-spacing:-0.073px;">Для справки, нажмите F1</span>
<span class="t" id="t84" style="left:668.70px;top:721.69px;font-size:11px;line-height:14px;color:#000;letter-spacing:0.041px;">2013.05.07 15:00</span>
<span class="t" id="t85" style="left:770.00px;top:721.69px;font-size:11px;line-height:14px;color:#000;letter-spacing:-0.092px;">O: 130.10</span>
<span class="t" id="t86" style="left:841.00px;top:721.69px;font-size:11px;line-height:14px;color:#000;letter-spacing:-0.000px;">H: 130.22</span>
<span class="t" id="t87" style="left:912.00px;top:721.69px;font-size:11px;line-height:14px;color:#000;letter-spacing:0.014px;">L: 129.94</span>
<span class="t" id="t88" style="left:982.00px;top:721.69px;font-size:11px;line-height:14px;color:#000;letter-spacing:-0.000px;">C: 130.09</span>
<span class="t" id="t89" style="left:1052.70px;top:721.69px;font-size:11px;line-height:14px;color:#000;letter-spacing:-0.100px;">V: 1147</span>
<span class="t" id="t90" style="left:1169.60px;top:721.69px;font-size:11px;line-height:14px;color:#000;letter-spacing:-0.100px;">259/1 kb</span>
</div>
</div></body></html>
